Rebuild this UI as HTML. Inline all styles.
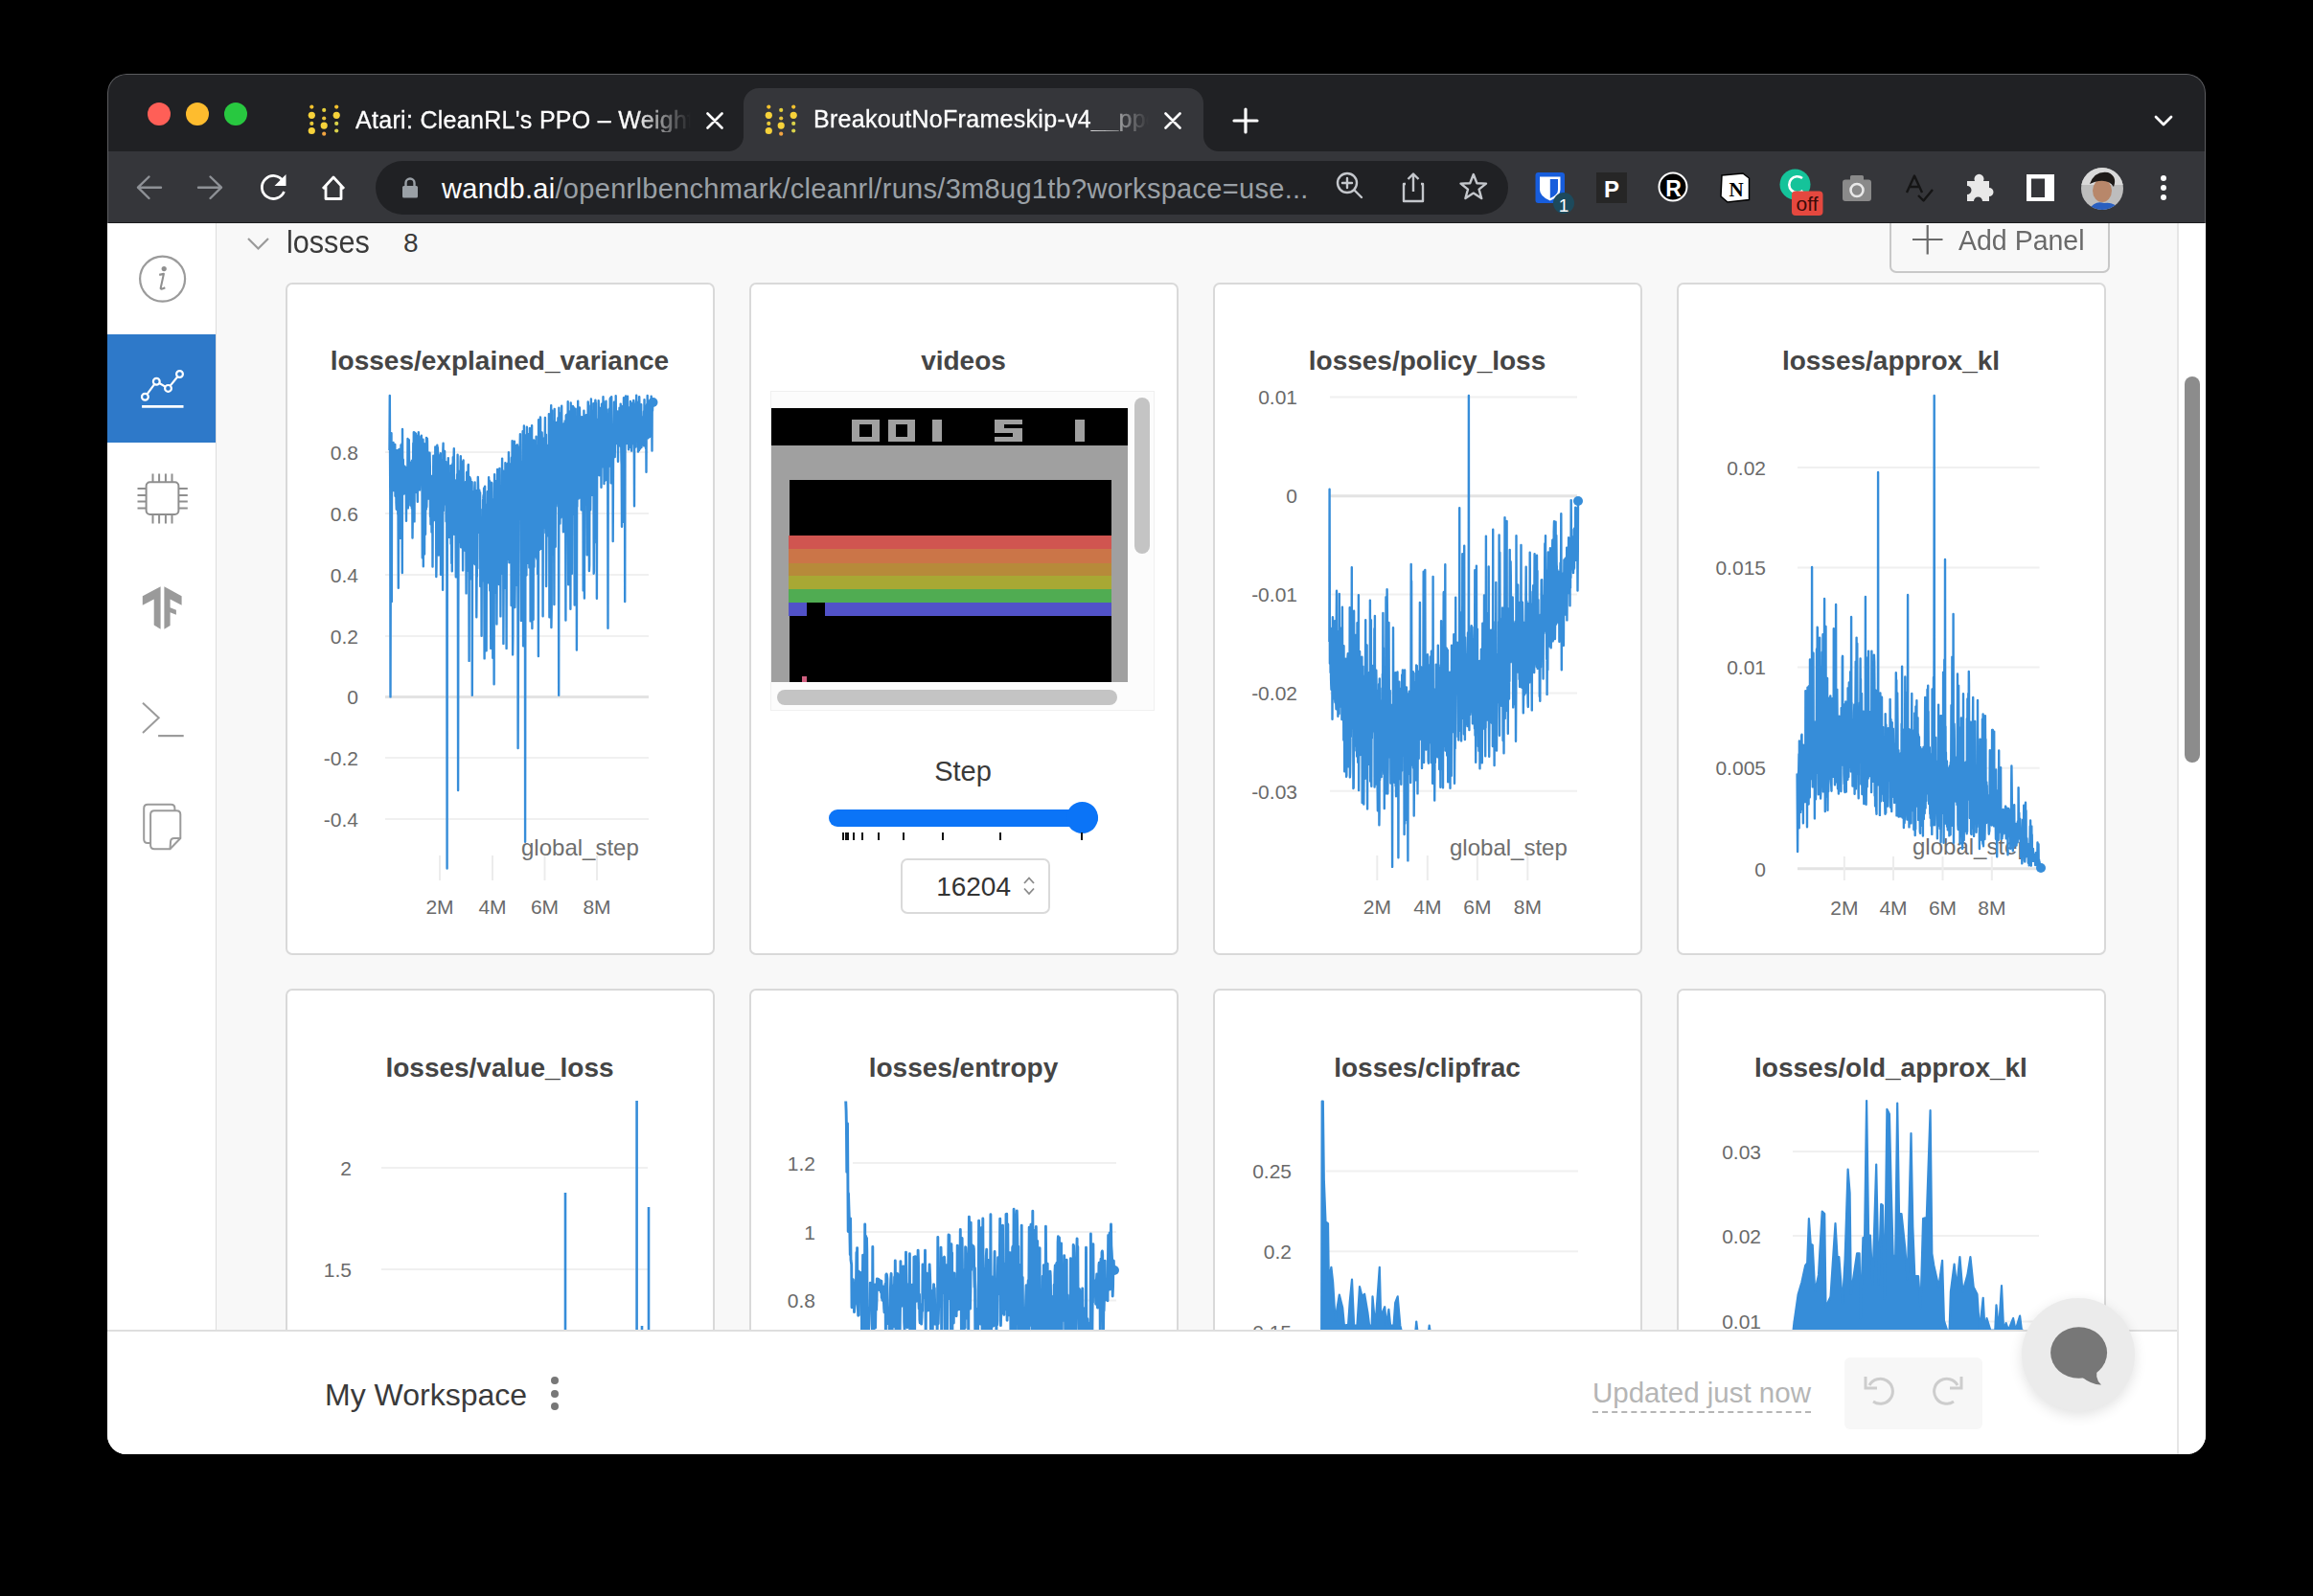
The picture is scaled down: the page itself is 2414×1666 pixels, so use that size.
<!DOCTYPE html><html><head><meta charset="utf-8"><title>wandb</title><style>
*{margin:0;padding:0;box-sizing:border-box}
html,body{width:2414px;height:1666px;overflow:hidden;background:#000}
body{position:relative;font-family:"Liberation Sans",sans-serif}
.a{position:absolute}
.t{position:absolute;white-space:nowrap;line-height:1}
.win{position:absolute;left:0;top:0;width:2414px;height:1666px;clip-path:inset(77px 112px 148px 112px round 20px)}
.main{position:absolute;left:0;top:0;width:2414px;height:1666px;clip-path:inset(233px 142px 278px 226px)}
.panel{position:absolute;background:#fff;border:2px solid #d9d9d9;border-radius:7px}
.ttl{position:absolute;white-space:nowrap;line-height:1;font-weight:bold;font-size:28px;color:#454545;text-align:center}
.yl{position:absolute;white-space:nowrap;line-height:1;font-size:21px;color:#6a6a6a;text-align:right}
.xl{position:absolute;white-space:nowrap;line-height:1;font-size:21px;color:#6a6a6a;text-align:center}
svg{position:absolute;left:0;top:0;overflow:visible}
</style></head><body>
<div class="win">
<div class="a" style="left:112px;top:77px;width:2190px;height:82px;background:#202124"></div>
<div class="a" style="left:112px;top:158px;width:2190px;height:75px;background:#35363a"></div>
<div class="a" style="left:112px;top:232px;width:2190px;height:1px;background:#1b1b1d"></div>
<div class="a" style="left:776px;top:92px;width:480px;height:70px;background:#35363a;border-radius:16px 16px 0 0"></div>
<div class="a" style="left:392px;top:168px;width:1182px;height:56px;background:#202124;border-radius:28px"></div>
<div class="a" style="left:154px;top:107px;width:24px;height:24px;border-radius:50%;background:#ff5f57"></div>
<div class="a" style="left:194px;top:107px;width:24px;height:24px;border-radius:50%;background:#febc2e"></div>
<div class="a" style="left:234px;top:107px;width:24px;height:24px;border-radius:50%;background:#28c840"></div>
<div class="a" style="left:760px;top:142px;width:16px;height:16px;background:radial-gradient(circle at 0 0, #202124 15.5px, #35363a 16.5px)"></div>
<div class="a" style="left:1256px;top:142px;width:16px;height:16px;background:radial-gradient(circle at 100% 0, #202124 15.5px, #35363a 16.5px)"></div>
<svg style="left:321.5px;top:110px" width="33" height="33" viewBox="0 0 33 33"><circle cx="3.3" cy="1.6" r="2.1" fill="#f2c12e"/><circle cx="3.3" cy="10.3" r="3.6" fill="#f7d23a"/><circle cx="3.3" cy="18.9" r="2.1" fill="#e9c93a"/><circle cx="3.3" cy="26.5" r="3.6" fill="#f7d23a"/><circle cx="16.2" cy="4.9" r="2.1" fill="#e4cf3c"/><circle cx="16.2" cy="13.5" r="2.1" fill="#e8c43a"/><circle cx="16.2" cy="21.1" r="3.6" fill="#f7d23a"/><circle cx="16.2" cy="29.7" r="2.1" fill="#f2a541"/><circle cx="29.2" cy="1.6" r="2.1" fill="#f2c12e"/><circle cx="29.2" cy="10.3" r="3.6" fill="#f7d23a"/><circle cx="29.2" cy="18.9" r="2.1" fill="#d9d24a"/><circle cx="29.2" cy="26.5" r="2.1" fill="#d9d24a"/></svg>
<svg style="left:799px;top:110px" width="33" height="33" viewBox="0 0 33 33"><circle cx="3.3" cy="1.6" r="2.1" fill="#f2c12e"/><circle cx="3.3" cy="10.3" r="3.6" fill="#f7d23a"/><circle cx="3.3" cy="18.9" r="2.1" fill="#e9c93a"/><circle cx="3.3" cy="26.5" r="3.6" fill="#f7d23a"/><circle cx="16.2" cy="4.9" r="2.1" fill="#e4cf3c"/><circle cx="16.2" cy="13.5" r="2.1" fill="#e8c43a"/><circle cx="16.2" cy="21.1" r="3.6" fill="#f7d23a"/><circle cx="16.2" cy="29.7" r="2.1" fill="#f2a541"/><circle cx="29.2" cy="1.6" r="2.1" fill="#f2c12e"/><circle cx="29.2" cy="10.3" r="3.6" fill="#f7d23a"/><circle cx="29.2" cy="18.9" r="2.1" fill="#d9d24a"/><circle cx="29.2" cy="26.5" r="2.1" fill="#d9d24a"/></svg>
<div class="t" style="left:371px;top:112.9px;width:352px;overflow:hidden;font-size:25px;letter-spacing:0.3px;color:#fff;-webkit-text-stroke:0.3px #fff;-webkit-mask-image:linear-gradient(90deg,#000 290px,transparent 350px)">Atari: CleanRL&#39;s PPO &#8211; Weights &amp; Biases</div>
<div class="t" style="left:849px;top:112.3px;width:352px;overflow:hidden;font-size:25px;letter-spacing:0.3px;color:#fff;-webkit-text-stroke:0.3px #fff;-webkit-mask-image:linear-gradient(90deg,#000 290px,transparent 350px)">BreakoutNoFrameskip-v4__ppo_atari__1</div>
<svg style="left:0;top:0" width="2414" height="240" viewBox="0 0 2414 240"><path d="M738.5 118.5 L753.5 133.5 M753.5 118.5 L738.5 133.5 M1216.5 118.5 L1231.5 133.5 M1231.5 118.5 L1216.5 133.5" stroke="#fff" stroke-width="2.6" stroke-linecap="round"/><path d="M1288 126 L1312 126 M1300 114 L1300 138" stroke="#fff" stroke-width="3.2" stroke-linecap="round"/><path d="M2250 122 L2258 130 L2266 122" fill="none" stroke="#fff" stroke-width="2.8" stroke-linecap="round" stroke-linejoin="round"/><path d="M144 195.7 L168 195.7 M155.5 184.5 L144 195.7 L155.5 207" fill="none" stroke="#8e9196" stroke-width="2.4" stroke-linecap="round" stroke-linejoin="round"/><path d="M207 195.7 L231 195.7 M219.5 184.5 L231 195.7 L219.5 207" fill="none" stroke="#8e9196" stroke-width="2.4" stroke-linecap="round" stroke-linejoin="round"/><path d="M295.5 189 A12 12 0 1 0 296.5 200" fill="none" stroke="#fff" stroke-width="2.8"/><path d="M298.5 182 L298.5 194 L286.5 194 Z" fill="#fff"/><path d="M337 197 L348 185 L359 197 M340 194.5 L340 207.5 L356 207.5 L356 194.5" fill="none" stroke="#fff" stroke-width="2.8" stroke-linejoin="round"/><rect x="420" y="194" width="16" height="12.5" rx="1.5" fill="#9aa0a6"/><path d="M423.5 194.5 L423.5 191 A4.5 4.5 0 0 1 432.5 191 L432.5 194.5" fill="none" stroke="#9aa0a6" stroke-width="2.4"/><circle cx="1406" cy="191" r="10" fill="none" stroke="#c4c7cc" stroke-width="2.4"/><path d="M1413.5 198.5 L1421 206 M1401 191 L1411 191 M1406 186 L1406 196" stroke="#c4c7cc" stroke-width="2.4" stroke-linecap="round"/><path d="M1467 192 L1465 192 L1465 210 L1485 210 L1485 192 L1483 192 M1475 200 L1475 182 M1469.5 187 L1475 181.5 L1480.5 187" fill="none" stroke="#c4c7cc" stroke-width="2.4" stroke-linejoin="round"/><path d="M1537.8 182 L1541.4 191.2 L1551 191.6 L1543.6 197.6 L1546.2 207 L1537.8 201.6 L1529.4 207 L1532 197.6 L1524.6 191.6 L1534.2 191.2 Z" fill="none" stroke="#c4c7cc" stroke-width="2.4" stroke-linejoin="round"/><rect x="1602.5" y="180" width="30.5" height="32" rx="3" fill="#175ddc"/><path d="M1607 184.5 L1628.5 184.5 L1628.5 198 Q1628.5 205 1617.8 209.5 Q1607 205 1607 198 Z" fill="#fff"/><path d="M1617.8 187 L1626 187 L1626 198 Q1626 203.5 1617.8 207 Z" fill="#175ddc"/><circle cx="1632" cy="212" r="11" fill="#1d4a5c"/><text x="1632" y="221" font-family="Liberation Sans" font-size="19" fill="#fff" text-anchor="middle">1</text><rect x="1666" y="180" width="32" height="32" fill="#262626"/><text x="1682" y="206" font-family="Liberation Sans" font-weight="bold" font-size="24" fill="#fff" text-anchor="middle">P</text><circle cx="1746" cy="195" r="14.5" fill="#000" stroke="#fff" stroke-width="2"/><text x="1746.5" y="204.5" font-family="Liberation Sans" font-weight="bold" font-size="23" fill="#fff" text-anchor="middle">R</text><path d="M1797 183 L1819 181 L1825.5 186 L1825.5 208.5 L1803 211 L1796 205 Z" fill="#fff" stroke="#000" stroke-width="1.5"/><text x="1812" y="205" font-family="Liberation Serif" font-weight="bold" font-size="21" fill="#000" text-anchor="middle">N</text><circle cx="1873.5" cy="192.5" r="16" fill="#15c39a"/><path d="M1881 186 A8.5 8.5 0 1 0 1881.5 199" fill="none" stroke="#fff" stroke-width="2.6"/><rect x="1870" y="199.5" width="32.5" height="25.5" rx="4" fill="#e5483f"/><text x="1886" y="220" font-family="Liberation Sans" font-size="21" fill="#3a0b08" text-anchor="middle">off</text><rect x="1923" y="187.5" width="30" height="22.5" rx="3" fill="#8a8a8a"/><rect x="1931" y="183" width="14" height="6" rx="1.5" fill="#8a8a8a"/><circle cx="1938" cy="198.5" r="6.5" fill="none" stroke="#e8e8e8" stroke-width="2.6"/><path d="M1990 201 L1998 183.5 L2006 201 M1993 195 L2003 195 M2002 204 L2007.5 209.5 L2017 198" fill="none" stroke="#151515" stroke-width="2.4" stroke-linejoin="round"/><path d="M2053 189 L2061 189 A5 5 0 1 1 2070 189 L2076 189 L2076 196 A4.5 4.5 0 1 1 2076 205 L2076 210 L2069 210 A4.5 4.5 0 1 0 2060 210 L2053 210 L2053 203 A4.5 4.5 0 1 0 2053 194 Z" fill="#e8e8e8"/><rect x="2115" y="182" width="29" height="28" fill="#fff"/><rect x="2120" y="186.5" width="14" height="19.5" fill="#35363a"/><defs><clipPath id="av"><circle cx="2194" cy="197" r="22"/></clipPath></defs><g clip-path="url(#av)"><rect x="2172" y="175" width="44" height="44" fill="#bdbdbd"/><rect x="2172" y="175" width="44" height="18" fill="#d9d9d9"/><ellipse cx="2194" cy="199" rx="10" ry="12" fill="#b8876a"/><path d="M2181 192 Q2186 178 2200 180 Q2210 184 2206 195 Q2200 186 2186 190 Z" fill="#1e1a18"/><path d="M2180 219 Q2186 209 2196 212 Q2206 210 2212 219 Z" fill="#2a5fbf"/></g><circle cx="2258" cy="186" r="3" fill="#fff"/><circle cx="2258" cy="196" r="3" fill="#fff"/><circle cx="2258" cy="206" r="3" fill="#fff"/></svg>
<div class="t" style="left:461px;top:182.5px;font-size:29px;letter-spacing:0.3px;color:#fff">wandb.ai<span style="color:#9aa0a6">/openrlbenchmark/cleanrl/runs/3m8ug1tb?workspace=use...</span></div>
<div class="a" style="left:112px;top:233px;width:2190px;height:1285px;background:#f8f8f8"></div>
<div class="a" style="left:112px;top:233px;width:114px;height:1156px;background:#fff;border-right:1px solid #dedede"></div>
<div class="a" style="left:112px;top:349px;width:113px;height:113px;background:#2e79c9"></div>
<svg style="left:0;top:0" width="240" height="1000" viewBox="0 0 240 1000"><circle cx="169.6" cy="291.1" r="23.5" fill="none" stroke="#9b9b9b" stroke-width="2.2"/><path d="M151.4 414.3 L163.3 398.2 L175.5 405.4 L187.5 390.5" fill="none" stroke="#fff" stroke-width="2.2"/><circle cx="151.4" cy="414.3" r="3.4" fill="#2e79c9" stroke="#fff" stroke-width="2.2"/><circle cx="163.3" cy="398.2" r="3.4" fill="#2e79c9" stroke="#fff" stroke-width="2.2"/><circle cx="175.5" cy="405.4" r="3.4" fill="#2e79c9" stroke="#fff" stroke-width="2.2"/><circle cx="187.5" cy="390.5" r="3.4" fill="#2e79c9" stroke="#fff" stroke-width="2.2"/><path d="M148.1 424.4 L191.5 424.4" stroke="#fff" stroke-width="2.6"/><rect x="152.6" y="503.2" width="33.8" height="33.8" rx="4" fill="none" stroke="#8f8f8f" stroke-width="2"/><path d="M159.5 494.4 V503 M166.1 494.4 V503 M172.9 494.4 V503 M179.5 494.4 V503 M159.5 537 V546.5 M166.1 537 V546.5 M172.9 537 V546.5 M179.5 537 V546.5 M143.5 510.1 H152.6 M143.5 517 H152.6 M143.5 523.6 H152.6 M143.5 530.4 H152.6 M186.4 510.1 H195.8 M186.4 517 H195.8 M186.4 523.6 H195.8 M186.4 530.4 H195.8" stroke="#8f8f8f" stroke-width="2"/><path d="M148.8 622.3 L167.6 612.3 L167.6 656.8 L160.7 652.4 L160.7 625.5 L148.8 631.7 Z" fill="#9a9a9a"/><path d="M171.4 612.3 L189.6 622.3 L189.6 631.7 L177.6 625.5 L177.6 634.2 L183.9 636.7 L183.9 641.7 L177.6 639.2 L177.6 653 L171.4 656.8 Z" fill="#9a9a9a"/><path d="M149 733.8 L165.7 749.3 L149 765" fill="none" stroke="#9b9b9b" stroke-width="2"/><path d="M165.1 768.1 L191.7 768.1" stroke="#9b9b9b" stroke-width="2.2"/><path d="M157 880 L154 880 Q150.2 880 150.2 876 L150.2 843.8 Q150.2 839.8 154.2 839.8 L178.4 839.8 Q182.4 839.8 182.4 843.8 L182.4 846.3" fill="none" stroke="#9b9b9b" stroke-width="2"/><path d="M161.1 846.3 L184.3 846.3 Q188.3 846.3 188.3 850.3 L188.3 875 L177.5 886.2 L161.1 886.2 Q157.1 886.2 157.1 882.2 L157.1 850.3 Q157.1 846.3 161.1 846.3 Z" fill="#fff" stroke="#9b9b9b" stroke-width="2"/><path d="M188.3 875 L182 875 Q178 875 178 879 L177.5 886.2" fill="none" stroke="#9b9b9b" stroke-width="2"/></svg>
<svg style="left:0;top:0" width="240" height="400" viewBox="0 0 240 400"><circle cx="171.2" cy="280.6" r="2.6" fill="#8f8f8f"/><path d="M166.2 286.9 L170.9 285.9 L167.7 300.6 Q167.3 302.8 172.3 300.2" fill="none" stroke="#8f8f8f" stroke-width="2.1" stroke-linejoin="round"/></svg>
<div class="a" style="left:2272px;top:233px;width:30px;height:1285px;background:#fff;border-left:2px solid #e6e6e6"></div>
<div class="a" style="left:2280px;top:393px;width:16px;height:403px;background:#8c8c8c;border-radius:8px"></div>
<div class="main">
<div class="panel" style="left:298px;top:295px;width:448px;height:702px"></div>
<div class="panel" style="left:781.5px;top:295px;width:448px;height:702px"></div>
<div class="panel" style="left:1265.5px;top:295px;width:448px;height:702px"></div>
<div class="panel" style="left:1749.5px;top:295px;width:448px;height:702px"></div>
<div class="panel" style="left:298px;top:1032px;width:448px;height:702px"></div>
<div class="panel" style="left:781.5px;top:1032px;width:448px;height:702px"></div>
<div class="panel" style="left:1265.5px;top:1032px;width:448px;height:702px"></div>
<div class="panel" style="left:1749.5px;top:1032px;width:448px;height:702px"></div>
<div class="ttl" style="left:221.5px;top:363.3px;width:600px">losses/explained_variance</div>
<div class="yl" style="left:224px;top:461.7px;width:150px">0.8</div>
<div class="yl" style="left:224px;top:525.7px;width:150px">0.6</div>
<div class="yl" style="left:224px;top:589.7px;width:150px">0.4</div>
<div class="yl" style="left:224px;top:653.7px;width:150px">0.2</div>
<div class="yl" style="left:224px;top:717.2px;width:150px">0</div>
<div class="yl" style="left:224px;top:780.7px;width:150px">-0.2</div>
<div class="yl" style="left:224px;top:844.7px;width:150px">-0.4</div>
<div class="xl" style="left:399px;top:935.7px;width:120px">2M</div>
<div class="xl" style="left:454px;top:935.7px;width:120px">4M</div>
<div class="xl" style="left:508.5px;top:935.7px;width:120px">6M</div>
<div class="xl" style="left:563px;top:935.7px;width:120px">8M</div>
<div class="t" style="left:544px;top:872.8px;font-size:24px;color:#6e6e6e">global_step</div>
<div class="ttl" style="left:705.5px;top:363.3px;width:600px">videos</div>
<div class="a" style="left:804px;top:408px;width:401px;height:334px;background:#fcfcfc;border:1px solid #f0f0f0"></div>
<div class="a" style="left:805px;top:426px;width:372px;height:286px;background:#000;overflow:hidden"><div class="a" style="left:0;top:39px;width:372px;height:247px;background:#a0a0a0"></div><div class="a" style="left:19px;top:75px;width:336px;height:211px;background:#000"></div><div class="a" style="left:18px;top:133px;width:337px;height:14px;background:#d05550"></div><div class="a" style="left:18px;top:147px;width:337px;height:15px;background:#cb7548"></div><div class="a" style="left:18px;top:162px;width:337px;height:13px;background:#b78a3a"></div><div class="a" style="left:18px;top:175px;width:337px;height:14px;background:#a8a834"></div><div class="a" style="left:18px;top:189px;width:337px;height:14px;background:#50ac52"></div><div class="a" style="left:18px;top:203px;width:337px;height:14px;background:#5152c8"></div><div class="a" style="left:37px;top:203px;width:19px;height:14px;background:#000"></div><div class="a" style="left:32px;top:280px;width:5px;height:6px;background:#d06080"></div></div>
<div class="a" style="left:889px;top:438px;width:28.5px;height:23px;background:#a0a0a0"></div>
<div class="a" style="left:897px;top:443px;width:12.5px;height:12.5px;background:#000"></div>
<div class="a" style="left:926.5px;top:438px;width:28.5px;height:23px;background:#a0a0a0"></div>
<div class="a" style="left:934.5px;top:443px;width:12.5px;height:12.5px;background:#000"></div>
<div class="a" style="left:973px;top:438px;width:10px;height:23px;background:#a0a0a0"></div>
<div class="a" style="left:1038px;top:438px;width:29px;height:5px;background:#a0a0a0"></div>
<div class="a" style="left:1038px;top:438px;width:10px;height:12px;background:#a0a0a0"></div>
<div class="a" style="left:1038px;top:447px;width:29px;height:5px;background:#a0a0a0"></div>
<div class="a" style="left:1057px;top:447px;width:10px;height:14px;background:#a0a0a0"></div>
<div class="a" style="left:1038px;top:456px;width:29px;height:5px;background:#a0a0a0"></div>
<div class="a" style="left:1122px;top:438px;width:10px;height:23px;background:#a0a0a0"></div>
<div class="a" style="left:1184px;top:415px;width:16px;height:163px;background:#c4c4c4;border-radius:8px"></div>
<div class="a" style="left:811px;top:720px;width:355px;height:16px;background:#c4c4c4;border-radius:8px"></div>
<div class="t" style="left:905px;top:791px;width:200px;text-align:center;font-size:29px;color:#3a3a3a">Step</div>
<div class="a" style="left:865px;top:845px;width:281px;height:18px;background:#0b74f7;border-radius:9px"></div>
<div class="a" style="left:1113px;top:837px;width:33px;height:33px;background:#0b74f7;border-radius:50%"></div>
<div class="a" style="left:879.2px;top:869px;width:2px;height:8px;background:#111"></div>
<div class="a" style="left:881.6px;top:869px;width:2px;height:8px;background:#111"></div>
<div class="a" style="left:884.3px;top:869px;width:2px;height:8px;background:#111"></div>
<div class="a" style="left:890.2px;top:869px;width:2px;height:8px;background:#111"></div>
<div class="a" style="left:899.2px;top:869px;width:2px;height:8px;background:#111"></div>
<div class="a" style="left:916.1px;top:869px;width:2px;height:8px;background:#111"></div>
<div class="a" style="left:942.1px;top:869px;width:2px;height:8px;background:#111"></div>
<div class="a" style="left:982.9px;top:869px;width:2px;height:8px;background:#111"></div>
<div class="a" style="left:1043.1px;top:869px;width:2px;height:8px;background:#111"></div>
<div class="a" style="left:1128.2px;top:869px;width:2px;height:8px;background:#111"></div>
<div class="a" style="left:940px;top:896px;width:156px;height:58px;border:2px solid #dadada;border-radius:7px;background:#fff"></div>
<div class="t" style="left:955px;top:912px;width:100px;text-align:right;font-size:28px;color:#333">16204</div>
<div class="ttl" style="left:1189.5px;top:363.3px;width:600px">losses/policy_loss</div>
<div class="yl" style="left:1204px;top:404.2px;width:150px">0.01</div>
<div class="yl" style="left:1204px;top:507.4px;width:150px">0</div>
<div class="yl" style="left:1204px;top:610.1px;width:150px">-0.01</div>
<div class="yl" style="left:1204px;top:713.2px;width:150px">-0.02</div>
<div class="yl" style="left:1204px;top:815.5px;width:150px">-0.03</div>
<div class="xl" style="left:1377.3px;top:935.7px;width:120px">2M</div>
<div class="xl" style="left:1429.8px;top:935.7px;width:120px">4M</div>
<div class="xl" style="left:1481.8px;top:935.7px;width:120px">6M</div>
<div class="xl" style="left:1534.3px;top:935.7px;width:120px">8M</div>
<div class="t" style="left:1513px;top:872.8px;font-size:24px;color:#6e6e6e">global_step</div>
<div class="ttl" style="left:1673.5px;top:363.3px;width:600px">losses/approx_kl</div>
<div class="yl" style="left:1693px;top:477.7px;width:150px">0.02</div>
<div class="yl" style="left:1693px;top:582.2px;width:150px">0.015</div>
<div class="yl" style="left:1693px;top:686.3px;width:150px">0.01</div>
<div class="yl" style="left:1693px;top:791.4px;width:150px">0.005</div>
<div class="yl" style="left:1693px;top:896.5px;width:150px">0</div>
<div class="xl" style="left:1864.8px;top:936.7px;width:120px">2M</div>
<div class="xl" style="left:1916px;top:936.7px;width:120px">4M</div>
<div class="xl" style="left:1967.5px;top:936.7px;width:120px">6M</div>
<div class="xl" style="left:2018.8000000000002px;top:936.7px;width:120px">8M</div>
<div class="t" style="left:1996px;top:871.8px;font-size:24px;color:#6e6e6e">global_step</div>
<div class="ttl" style="left:221.5px;top:1101.0px;width:600px">losses/value_loss</div>
<div class="yl" style="left:217px;top:1208.7px;width:150px">2</div>
<div class="yl" style="left:217px;top:1314.7px;width:150px">1.5</div>
<div class="ttl" style="left:705.5px;top:1101.0px;width:600px">losses/entropy</div>
<div class="yl" style="left:701px;top:1203.7px;width:150px">1.2</div>
<div class="yl" style="left:701px;top:1275.7px;width:150px">1</div>
<div class="yl" style="left:701px;top:1347.3px;width:150px">0.8</div>
<div class="ttl" style="left:1189.5px;top:1101.0px;width:600px">losses/clipfrac</div>
<div class="yl" style="left:1198px;top:1212.2px;width:150px">0.25</div>
<div class="yl" style="left:1198px;top:1296.0px;width:150px">0.2</div>
<div class="yl" style="left:1198px;top:1379.7px;width:150px">0.15</div>
<div class="ttl" style="left:1673.5px;top:1101.0px;width:600px">losses/old_approx_kl</div>
<div class="yl" style="left:1688px;top:1191.7px;width:150px">0.03</div>
<div class="yl" style="left:1688px;top:1279.7px;width:150px">0.02</div>
<div class="yl" style="left:1688px;top:1369.1px;width:150px">0.01</div>
<div class="t" style="left:299px;top:234.5px;font-size:34px;color:#3a3a3a;transform-origin:0 0;transform:scaleX(0.9)">losses</div>
<div class="t" style="left:421px;top:240px;font-size:28px;color:#3a3a3a">8</div>
<div class="a" style="left:1972px;top:222px;width:230px;height:63px;border:2px solid #c8c8c8;border-radius:7px;background:#f8f8f8"></div>
<div class="t" style="left:2044px;top:236px;font-size:30px;color:#6a6a6a;transform-origin:0 0;transform:scaleX(0.95)">Add Panel</div>
<svg width="2414" height="1666" viewBox="0 0 2414 1666"><line x1="402" y1="472" x2="677" y2="472" stroke="#f0f0f0" stroke-width="2"/><line x1="402" y1="536" x2="677" y2="536" stroke="#f0f0f0" stroke-width="2"/><line x1="402" y1="600" x2="677" y2="600" stroke="#f0f0f0" stroke-width="2"/><line x1="402" y1="664" x2="677" y2="664" stroke="#f0f0f0" stroke-width="2"/><line x1="402" y1="727.5" x2="677" y2="727.5" stroke="#e3e3e3" stroke-width="3"/><line x1="402" y1="791" x2="677" y2="791" stroke="#f0f0f0" stroke-width="2"/><line x1="402" y1="855" x2="677" y2="855" stroke="#f0f0f0" stroke-width="2"/><line x1="459" y1="893" x2="459" y2="919" stroke="#ececec" stroke-width="2"/><line x1="514" y1="893" x2="514" y2="919" stroke="#ececec" stroke-width="2"/><line x1="568.5" y1="893" x2="568.5" y2="919" stroke="#ececec" stroke-width="2"/><line x1="623" y1="893" x2="623" y2="919" stroke="#ececec" stroke-width="2"/><path d="M406.5 469.9 L406.8 413.0 L407.0 463.4 L407.3 522.8 L407.5 727.4 L407.8 570.9 L408.0 455.7 L408.3 505.2 L408.5 452.2 L408.8 628.0 L409.0 509.1 L409.3 480.7 L409.5 487.8 L409.8 479.1 L410.0 463.7 L410.3 489.0 L410.5 461.9 L410.8 512.0 L411.0 466.0 L411.3 505.8 L411.5 508.8 L411.8 493.8 L412.0 491.9 L412.3 463.9 L412.5 517.8 L412.8 495.6 L413.0 512.5 L413.3 500.4 L413.5 525.0 L413.8 531.7 L414.0 470.3 L414.3 501.8 L414.5 499.5 L414.8 504.5 L415.0 470.4 L415.3 536.8 L415.5 517.9 L415.8 613.8 L416.0 534.2 L416.3 469.6 L416.5 469.0 L416.8 471.2 L417.0 517.9 L417.3 476.0 L417.5 544.9 L417.8 561.8 L418.0 515.0 L418.3 495.9 L418.5 464.5 L418.8 503.6 L419.0 523.6 L419.3 528.0 L419.5 463.2 L419.8 598.0 L420.0 448.0 L420.3 499.2 L420.5 491.1 L420.8 479.7 L421.0 506.6 L421.3 504.2 L421.5 515.6 L421.8 488.6 L422.0 503.9 L422.3 498.8 L422.5 486.7 L422.8 511.6 L423.0 495.6 L423.3 496.9 L423.5 507.4 L423.8 503.4 L424.0 543.7 L424.3 488.0 L424.5 492.7 L424.8 490.7 L425.0 507.8 L425.3 507.7 L425.5 458.0 L425.8 530.4 L426.0 485.9 L426.3 481.1 L426.5 512.3 L426.8 459.2 L427.0 474.8 L427.3 510.0 L427.5 512.9 L427.8 514.2 L428.0 490.9 L428.3 527.6 L428.5 489.9 L428.8 482.8 L429.0 504.6 L429.3 524.1 L429.5 482.4 L429.8 530.4 L430.0 480.7 L430.3 511.2 L430.5 561.6 L430.8 534.2 L431.0 494.3 L431.3 462.6 L431.5 521.6 L431.8 451.2 L432.0 504.8 L432.3 454.2 L432.5 544.4 L432.8 451.7 L433.0 511.4 L433.3 508.7 L433.5 479.1 L433.8 484.2 L434.0 452.8 L434.3 501.8 L434.5 496.5 L434.8 514.1 L435.0 504.3 L435.3 478.1 L435.5 507.9 L435.8 523.7 L436.0 454.8 L436.3 509.4 L436.5 498.6 L436.8 451.3 L437.0 473.5 L437.3 471.4 L437.5 491.3 L437.8 474.6 L438.0 511.5 L438.3 499.1 L438.5 486.4 L438.8 476.8 L439.0 504.6 L439.3 455.6 L439.5 483.3 L439.8 454.6 L440.0 485.4 L440.3 481.0 L440.5 500.9 L440.8 582.3 L441.0 482.7 L441.3 515.0 L441.5 458.7 L441.8 591.3 L442.0 534.2 L442.3 540.4 L442.5 489.9 L442.8 463.1 L443.0 578.4 L443.3 475.5 L443.5 489.9 L443.8 522.0 L444.0 557.7 L444.3 498.3 L444.5 487.4 L444.8 531.4 L445.0 456.9 L445.3 529.2 L445.5 518.4 L445.8 457.6 L446.0 460.7 L446.3 496.5 L446.5 471.6 L446.8 504.0 L447.0 479.5 L447.3 501.4 L447.5 520.5 L447.8 505.8 L448.0 492.5 L448.3 491.3 L448.5 472.8 L448.8 486.8 L449.0 538.9 L449.3 521.4 L449.5 547.2 L449.8 532.9 L450.0 496.8 L450.3 498.0 L450.5 555.4 L450.8 502.6 L451.0 504.9 L451.3 514.6 L451.5 591.5 L451.8 500.4 L452.0 525.6 L452.3 475.6 L452.5 542.0 L452.8 543.3 L453.0 505.6 L453.3 476.1 L453.5 480.4 L453.8 488.6 L454.0 536.9 L454.3 466.4 L454.5 496.5 L454.8 507.0 L455.0 474.1 L455.3 602.0 L455.5 592.9 L455.8 555.1 L456.0 475.3 L456.3 464.7 L456.5 475.1 L456.8 467.0 L457.0 471.5 L457.3 493.5 L457.5 529.8 L457.8 579.6 L458.0 535.6 L458.3 475.7 L458.5 500.9 L458.8 532.3 L459.0 502.3 L459.3 530.5 L459.5 493.7 L459.8 473.3 L460.0 599.8 L460.3 502.3 L460.5 481.6 L460.8 480.2 L461.0 555.7 L461.3 510.6 L461.6 516.1 L461.8 495.6 L462.1 615.7 L462.3 471.9 L462.6 462.7 L462.8 533.2 L463.1 514.0 L463.3 474.7 L463.6 482.6 L463.8 481.4 L464.1 470.9 L464.3 485.4 L464.6 499.5 L464.8 526.4 L465.1 509.5 L465.3 482.0 L465.6 544.3 L465.8 503.2 L466.1 497.7 L466.3 532.7 L466.6 906.5 L466.8 543.3 L467.1 490.3 L467.3 495.4 L467.6 495.1 L467.8 478.1 L468.1 560.6 L468.3 498.7 L468.6 534.7 L468.8 560.7 L469.1 520.3 L469.3 531.6 L469.6 552.9 L469.8 510.0 L470.1 541.4 L470.3 486.0 L470.6 567.8 L470.8 487.0 L471.1 562.6 L471.3 588.1 L471.6 515.5 L471.8 596.2 L472.1 532.4 L472.3 484.2 L472.6 531.6 L472.8 477.2 L473.1 543.2 L473.3 502.6 L473.6 478.8 L473.8 468.2 L474.1 557.8 L474.3 551.6 L474.6 528.3 L474.8 528.4 L475.1 501.4 L475.3 551.1 L475.6 545.7 L475.8 602.2 L476.1 512.4 L476.3 528.7 L476.6 503.3 L476.8 556.6 L477.1 495.2 L477.3 576.9 L477.6 474.8 L477.8 520.4 L478.1 825.1 L478.3 641.7 L478.6 537.1 L478.8 566.4 L479.1 533.2 L479.3 511.1 L479.6 491.8 L479.8 513.5 L480.1 500.2 L480.3 542.7 L480.6 482.0 L480.8 476.3 L481.1 571.2 L481.3 511.9 L481.6 486.0 L481.8 539.3 L482.1 485.7 L482.3 482.5 L482.6 537.4 L482.8 539.5 L483.1 595.4 L483.3 545.7 L483.6 480.5 L483.8 521.5 L484.1 556.8 L484.3 558.3 L484.6 535.7 L484.8 568.8 L485.1 521.2 L485.3 512.3 L485.6 574.9 L485.8 573.3 L486.1 502.9 L486.3 543.0 L486.6 619.4 L486.8 556.6 L487.1 493.0 L487.3 596.1 L487.6 494.8 L487.8 526.1 L488.1 497.8 L488.3 536.6 L488.6 485.9 L488.8 485.0 L489.1 587.0 L489.3 529.9 L489.6 689.9 L489.8 529.9 L490.1 497.9 L490.3 523.0 L490.6 498.7 L490.8 604.2 L491.1 500.1 L491.3 557.7 L491.6 519.4 L491.8 572.3 L492.1 549.6 L492.3 593.6 L492.6 503.2 L492.8 725.7 L493.1 518.8 L493.3 576.0 L493.6 583.6 L493.8 530.1 L494.1 513.4 L494.3 523.0 L494.6 588.4 L494.8 574.7 L495.1 574.7 L495.3 510.2 L495.6 503.4 L495.8 539.1 L496.1 589.3 L496.3 557.3 L496.6 512.0 L496.8 554.9 L497.1 590.2 L497.3 644.2 L497.6 599.6 L497.8 602.1 L498.1 544.0 L498.3 593.3 L498.6 534.8 L498.8 497.9 L499.1 507.1 L499.3 555.7 L499.6 544.1 L499.8 555.8 L500.1 530.4 L500.3 511.6 L500.6 546.7 L500.8 532.2 L501.1 514.3 L501.3 612.1 L501.6 552.2 L501.8 556.1 L502.1 563.6 L502.3 545.6 L502.6 663.8 L502.8 580.1 L503.1 588.7 L503.3 606.3 L503.6 531.8 L503.8 595.6 L504.1 522.1 L504.3 520.9 L504.6 517.0 L504.8 553.1 L505.1 509.5 L505.3 592.3 L505.6 687.4 L505.8 559.1 L506.1 507.8 L506.3 555.1 L506.6 603.8 L506.8 598.3 L507.1 548.3 L507.3 566.2 L507.6 679.3 L507.8 604.0 L508.1 526.8 L508.3 532.5 L508.6 547.8 L508.8 513.3 L509.1 525.4 L509.3 608.4 L509.6 549.9 L509.8 552.8 L510.1 498.2 L510.3 533.8 L510.6 531.9 L510.8 501.8 L511.1 573.0 L511.3 616.5 L511.6 510.5 L511.8 593.9 L512.1 636.7 L512.3 676.9 L512.6 585.0 L512.8 503.8 L513.1 508.8 L513.3 504.2 L513.6 535.4 L513.8 572.4 L514.1 534.3 L514.3 686.7 L514.6 539.7 L514.8 589.0 L515.1 563.7 L515.3 521.2 L515.6 714.3 L515.8 569.3 L516.1 495.2 L516.3 536.4 L516.6 550.5 L516.9 501.9 L517.1 570.7 L517.4 618.9 L517.6 544.9 L517.9 570.7 L518.1 531.8 L518.4 651.6 L518.6 605.4 L518.9 529.5 L519.1 490.0 L519.4 503.7 L519.6 504.6 L519.9 518.7 L520.1 522.2 L520.4 556.4 L520.6 589.7 L520.9 610.0 L521.1 567.8 L521.4 488.9 L521.6 560.0 L521.9 511.8 L522.1 546.4 L522.4 643.4 L522.6 574.3 L522.9 595.8 L523.1 509.5 L523.4 512.2 L523.6 568.9 L523.9 497.3 L524.1 478.6 L524.4 598.8 L524.6 556.5 L524.9 597.8 L525.1 491.5 L525.4 671.9 L525.6 622.7 L525.9 561.1 L526.1 544.7 L526.4 528.6 L526.6 568.7 L526.9 613.9 L527.1 561.5 L527.4 483.1 L527.6 596.4 L527.9 492.0 L528.1 519.5 L528.4 582.6 L528.6 676.9 L528.9 498.4 L529.1 516.0 L529.4 583.9 L529.6 485.3 L529.9 483.8 L530.1 496.3 L530.4 571.9 L530.6 533.7 L530.9 472.1 L531.1 480.1 L531.4 587.3 L531.6 560.8 L531.9 515.4 L532.1 484.2 L532.4 537.0 L532.6 524.8 L532.9 506.2 L533.1 577.2 L533.4 513.0 L533.6 632.0 L533.9 477.7 L534.1 505.0 L534.4 549.0 L534.6 460.3 L534.9 495.4 L535.1 683.4 L535.4 661.2 L535.6 472.2 L535.9 589.2 L536.1 601.3 L536.4 568.5 L536.6 521.6 L536.9 460.7 L537.1 490.1 L537.4 634.1 L537.6 613.5 L537.9 513.6 L538.1 535.8 L538.4 499.5 L538.6 610.8 L538.9 539.6 L539.1 464.9 L539.4 533.1 L539.6 465.7 L539.9 464.3 L540.1 465.7 L540.4 540.6 L540.6 781.1 L540.9 678.9 L541.1 543.9 L541.4 527.4 L541.6 516.7 L541.9 494.2 L542.1 467.0 L542.4 474.0 L542.6 467.2 L542.9 453.1 L543.1 526.8 L543.4 481.9 L543.6 574.9 L543.9 647.9 L544.1 556.9 L544.4 563.7 L544.6 500.6 L544.9 622.2 L545.1 522.3 L545.4 488.3 L545.6 450.2 L545.9 538.5 L546.1 674.2 L546.4 615.4 L546.6 537.5 L546.9 444.4 L547.1 578.1 L547.4 520.6 L547.6 540.6 L547.9 454.2 L548.1 878.8 L548.4 561.4 L548.6 479.7 L548.9 480.9 L549.1 593.8 L549.4 600.5 L549.6 472.6 L549.9 445.7 L550.1 566.7 L550.4 474.5 L550.6 461.6 L550.9 587.7 L551.1 564.6 L551.4 580.4 L551.6 453.1 L551.9 480.2 L552.1 491.0 L552.4 592.4 L552.6 495.3 L552.9 446.9 L553.1 577.9 L553.4 489.7 L553.6 648.4 L553.9 540.7 L554.1 507.5 L554.4 596.0 L554.6 515.1 L554.9 585.5 L555.1 444.1 L555.4 656.1 L555.6 578.1 L555.9 507.2 L556.1 634.5 L556.4 476.7 L556.6 646.8 L556.9 512.2 L557.1 459.5 L557.4 591.7 L557.6 460.3 L557.9 568.4 L558.1 504.1 L558.4 549.8 L558.6 528.8 L558.9 484.5 L559.1 503.8 L559.4 581.3 L559.6 455.8 L559.9 557.2 L560.1 481.6 L560.4 583.5 L560.6 473.0 L560.9 465.6 L561.1 599.1 L561.4 505.4 L561.6 485.8 L561.9 685.0 L562.1 438.2 L562.4 449.8 L562.6 465.6 L562.9 557.4 L563.1 573.8 L563.4 548.9 L563.6 490.0 L563.9 435.5 L564.1 437.1 L564.4 572.7 L564.6 522.1 L564.9 549.4 L565.1 487.5 L565.4 555.3 L565.6 451.4 L565.9 462.7 L566.1 523.6 L566.4 539.9 L566.6 643.2 L566.9 461.9 L567.1 532.8 L567.4 541.2 L567.6 492.9 L567.9 469.9 L568.1 457.3 L568.4 550.7 L568.6 467.8 L568.9 435.9 L569.1 544.1 L569.4 556.2 L569.6 540.0 L569.9 453.7 L570.1 612.0 L570.4 561.7 L570.6 468.8 L570.9 559.4 L571.1 464.8 L571.4 501.3 L571.7 495.2 L571.9 554.1 L572.2 559.4 L572.4 536.6 L572.7 513.5 L572.9 432.1 L573.2 503.8 L573.4 644.3 L573.7 511.9 L573.9 512.8 L574.2 526.6 L574.4 439.5 L574.7 459.3 L574.9 436.5 L575.2 423.1 L575.4 655.1 L575.7 635.4 L575.9 468.1 L576.2 428.5 L576.4 504.2 L576.7 488.5 L576.9 440.2 L577.2 578.8 L577.4 463.7 L577.7 455.3 L577.9 457.5 L578.2 565.2 L578.4 631.0 L578.7 427.0 L578.9 523.5 L579.2 564.1 L579.4 569.1 L579.7 570.7 L579.9 471.6 L580.2 457.1 L580.4 528.6 L580.7 522.2 L580.9 440.9 L581.2 459.2 L581.4 495.2 L581.7 481.1 L581.9 483.4 L582.2 458.3 L582.4 436.2 L582.7 483.0 L582.9 485.2 L583.2 725.7 L583.4 425.8 L583.7 443.3 L583.9 475.1 L584.2 529.7 L584.4 546.5 L584.7 431.7 L584.9 493.6 L585.2 476.1 L585.4 540.3 L585.7 522.6 L585.9 522.1 L586.2 423.7 L586.4 454.9 L586.7 477.2 L586.9 446.8 L587.2 499.7 L587.4 533.9 L587.7 517.8 L587.9 555.2 L588.2 478.9 L588.4 442.4 L588.7 496.7 L588.9 464.6 L589.2 454.4 L589.4 487.1 L589.7 439.5 L589.9 500.8 L590.2 526.3 L590.4 647.6 L590.7 433.8 L590.9 506.5 L591.2 432.9 L591.4 554.0 L591.7 493.8 L591.9 498.6 L592.2 524.1 L592.4 466.2 L592.7 419.3 L592.9 553.6 L593.2 610.3 L593.4 435.5 L593.7 437.3 L593.9 437.9 L594.2 509.7 L594.4 429.6 L594.7 493.7 L594.9 476.7 L595.2 503.7 L595.4 635.8 L595.7 420.5 L595.9 491.4 L596.2 488.0 L596.4 436.6 L596.7 434.1 L596.9 598.7 L597.2 475.3 L597.4 465.9 L597.7 506.1 L597.9 424.0 L598.2 486.7 L598.4 484.2 L598.7 425.1 L598.9 536.6 L599.2 481.0 L599.4 442.2 L599.7 631.5 L599.9 441.7 L600.2 456.7 L600.4 472.1 L600.7 426.8 L600.9 483.3 L601.2 450.0 L601.4 448.3 L601.7 514.6 L601.9 678.5 L602.2 463.0 L602.4 528.8 L602.7 459.5 L602.9 492.7 L603.2 418.7 L603.4 512.3 L603.7 520.6 L603.9 468.1 L604.2 433.9 L604.4 454.5 L604.7 469.4 L604.9 425.4 L605.2 436.6 L605.4 471.6 L605.7 510.7 L605.9 519.6 L606.2 471.6 L606.4 451.9 L606.7 532.2 L606.9 498.1 L607.2 435.2 L607.4 482.7 L607.7 471.3 L607.9 458.3 L608.2 462.0 L608.4 440.6 L608.7 616.4 L608.9 445.5 L609.2 459.4 L609.4 428.8 L609.7 443.2 L609.9 624.6 L610.2 464.1 L610.4 516.0 L610.7 449.3 L610.9 456.2 L611.2 521.3 L611.4 433.8 L611.7 499.5 L611.9 433.1 L612.2 518.9 L612.4 502.2 L612.7 579.2 L612.9 518.3 L613.2 437.4 L613.4 468.6 L613.7 419.4 L613.9 422.3 L614.2 506.9 L614.4 423.5 L614.7 490.0 L614.9 596.1 L615.2 589.6 L615.4 451.9 L615.7 486.0 L615.9 501.2 L616.2 532.3 L616.4 505.7 L616.7 507.1 L616.9 416.4 L617.2 498.9 L617.4 457.2 L617.7 452.8 L617.9 429.3 L618.2 430.5 L618.4 516.8 L618.7 476.1 L618.9 450.6 L619.2 462.6 L619.4 421.3 L619.7 598.7 L619.9 595.9 L620.2 446.3 L620.4 441.5 L620.7 478.3 L620.9 435.6 L621.2 420.6 L621.4 417.6 L621.7 420.8 L621.9 420.7 L622.2 507.6 L622.4 566.7 L622.7 508.6 L622.9 624.8 L623.2 447.6 L623.4 438.0 L623.7 444.1 L623.9 485.8 L624.2 491.6 L624.4 476.8 L624.7 418.3 L624.9 431.4 L625.2 491.0 L625.4 496.3 L625.7 432.1 L625.9 464.5 L626.2 426.0 L626.4 449.2 L626.7 441.9 L627.0 446.4 L627.2 452.2 L627.5 508.7 L627.7 468.6 L628.0 421.6 L628.2 433.9 L628.5 428.4 L628.7 448.8 L629.0 464.2 L629.2 459.1 L629.5 414.2 L629.7 487.2 L630.0 419.1 L630.2 439.4 L630.5 505.1 L630.7 468.6 L631.0 502.0 L631.2 440.8 L631.5 468.4 L631.7 469.9 L632.0 435.1 L632.2 449.2 L632.5 418.7 L632.7 442.7 L633.0 501.0 L633.2 458.4 L633.5 427.5 L633.7 454.2 L634.0 436.1 L634.2 432.2 L634.5 655.7 L634.7 487.4 L635.0 471.8 L635.2 442.2 L635.5 450.8 L635.7 486.6 L636.0 426.8 L636.2 447.3 L636.5 435.9 L636.7 416.2 L637.0 446.3 L637.2 415.1 L637.5 475.5 L637.7 504.2 L638.0 442.2 L638.2 414.1 L638.5 477.0 L638.7 448.3 L639.0 454.4 L639.2 470.6 L639.5 442.9 L639.7 565.1 L640.0 491.4 L640.2 454.2 L640.5 442.9 L640.7 447.3 L641.0 419.7 L641.2 430.8 L641.5 434.0 L641.7 477.0 L642.0 458.6 L642.2 447.7 L642.5 455.0 L642.7 413.3 L643.0 455.6 L643.2 463.1 L643.5 447.7 L643.7 448.1 L644.0 453.2 L644.2 443.4 L644.5 429.5 L644.7 430.4 L645.0 481.8 L645.2 451.8 L645.5 437.5 L645.7 463.7 L646.0 449.7 L646.2 464.0 L646.5 425.7 L646.7 454.6 L647.0 445.1 L647.2 448.9 L647.5 465.7 L647.7 421.6 L648.0 434.3 L648.2 461.0 L648.5 480.7 L648.7 484.6 L649.0 549.8 L649.2 456.0 L649.5 466.8 L649.7 424.1 L650.0 436.9 L650.2 510.0 L650.5 544.9 L650.7 444.6 L651.0 415.1 L651.2 422.6 L651.5 471.9 L651.7 425.7 L652.0 422.9 L652.2 628.0 L652.5 442.9 L652.7 449.0 L653.0 413.4 L653.2 418.0 L653.5 420.6 L653.7 463.1 L654.0 418.1 L654.2 445.4 L654.5 432.2 L654.7 422.2 L655.0 413.7 L655.2 455.5 L655.5 457.3 L655.7 449.5 L656.0 469.2 L656.2 425.2 L656.5 428.8 L656.7 448.9 L657.0 465.3 L657.2 466.9 L657.5 439.1 L657.7 452.8 L658.0 418.9 L658.2 451.5 L658.5 443.5 L658.7 428.3 L659.0 470.6 L659.2 462.2 L659.5 421.0 L659.7 433.4 L660.0 463.1 L660.2 438.9 L660.5 429.4 L660.7 451.5 L661.0 454.1 L661.2 417.9 L661.5 421.4 L661.7 430.5 L662.0 528.3 L662.2 427.8 L662.5 429.1 L662.7 440.0 L663.0 461.1 L663.2 423.6 L663.5 466.6 L663.7 425.7 L664.0 419.7 L664.2 412.8 L664.5 421.7 L664.7 435.1 L665.0 428.5 L665.2 428.8 L665.5 436.3 L665.7 428.1 L666.0 471.6 L666.2 419.6 L666.5 422.1 L666.7 432.7 L667.0 470.0 L667.2 414.1 L667.5 427.1 L667.7 443.6 L668.0 432.6 L668.2 468.2 L668.5 438.2 L668.7 458.4 L669.0 445.8 L669.2 422.2 L669.5 466.9 L669.7 461.9 L670.0 464.0 L670.2 447.3 L670.5 435.7 L670.7 442.0 L671.0 456.9 L671.2 460.2 L671.5 464.3 L671.7 442.7 L672.0 429.5 L672.2 465.4 L672.5 417.3 L672.7 434.9 L673.0 423.5 L673.2 438.2 L673.5 454.5 L673.7 441.2 L674.0 468.0 L674.2 424.8 L674.5 492.8 L674.7 441.2 L675.0 439.2 L675.2 422.0 L675.5 443.6 L675.7 413.0 L676.0 446.6 L676.2 429.9 L676.5 457.3 L676.7 441.8 L677.0 435.7 L677.2 437.9 L677.5 419.5 L677.7 419.3 L678.0 456.1 L678.2 430.2 L678.5 453.3 L678.7 446.0 L679.0 417.2 L679.2 449.6 L679.5 442.0 L679.7 413.6 L680.0 432.1 L680.2 424.9 L680.5 470.6 L680.7 421.1 L681.0 429.0 L681.2 422.9 L681.5 420.0" fill="none" stroke="#368dd9" stroke-width="2.4" stroke-linejoin="round"/><circle cx="681.5" cy="420.0" r="5" fill="#368dd9"/><path d="M1069 922 L1074 916.5 L1079 922 M1069 927.5 L1074 933 L1079 927.5" fill="none" stroke="#8a8a8a" stroke-width="1.8"/><line x1="1388" y1="414.5" x2="1646" y2="414.5" stroke="#f0f0f0" stroke-width="2"/><line x1="1388" y1="517.7" x2="1646" y2="517.7" stroke="#e3e3e3" stroke-width="3"/><line x1="1388" y1="620.4" x2="1646" y2="620.4" stroke="#f0f0f0" stroke-width="2"/><line x1="1388" y1="723.5" x2="1646" y2="723.5" stroke="#f0f0f0" stroke-width="2"/><line x1="1388" y1="825.8" x2="1646" y2="825.8" stroke="#f0f0f0" stroke-width="2"/><line x1="1437.3" y1="893" x2="1437.3" y2="919" stroke="#ececec" stroke-width="2"/><line x1="1489.8" y1="893" x2="1489.8" y2="919" stroke="#ececec" stroke-width="2"/><line x1="1541.8" y1="893" x2="1541.8" y2="919" stroke="#ececec" stroke-width="2"/><line x1="1594.3" y1="893" x2="1594.3" y2="919" stroke="#ececec" stroke-width="2"/><path d="M1387.4 670.1 L1387.6 510.7 L1387.9 692.4 L1388.1 683.5 L1388.3 664.5 L1388.6 702.0 L1388.8 685.8 L1389.1 708.7 L1389.3 715.4 L1389.5 719.9 L1389.8 683.5 L1390.0 672.4 L1390.2 655.6 L1390.5 750.8 L1390.7 705.2 L1390.9 644.3 L1391.2 652.8 L1391.4 712.9 L1391.7 670.3 L1391.9 658.7 L1392.1 725.3 L1392.4 729.5 L1392.6 688.5 L1392.8 691.2 L1393.1 648.1 L1393.3 732.1 L1393.5 733.4 L1393.8 670.3 L1394.0 684.3 L1394.3 734.7 L1394.5 740.2 L1394.7 652.6 L1395.0 616.7 L1395.2 673.2 L1395.4 704.8 L1395.7 671.8 L1395.9 703.5 L1396.1 718.5 L1396.4 747.8 L1396.6 662.7 L1396.8 659.0 L1397.1 729.7 L1397.3 697.7 L1397.6 745.1 L1397.8 619.9 L1398.0 734.5 L1398.3 684.9 L1398.5 696.5 L1398.7 737.5 L1399.0 699.1 L1399.2 731.5 L1399.4 660.6 L1399.7 655.4 L1399.9 672.9 L1400.2 698.3 L1400.4 751.1 L1400.6 722.4 L1400.9 633.8 L1401.1 683.1 L1401.3 749.1 L1401.6 724.3 L1401.8 680.4 L1402.0 689.3 L1402.3 772.5 L1402.5 674.2 L1402.8 746.3 L1403.0 739.8 L1403.2 805.3 L1403.5 703.0 L1403.7 709.2 L1403.9 727.4 L1404.2 717.8 L1404.4 687.7 L1404.6 721.1 L1404.9 694.0 L1405.1 810.7 L1405.4 809.3 L1405.6 759.7 L1405.8 760.4 L1406.1 776.7 L1406.3 709.1 L1406.5 685.7 L1406.8 682.2 L1407.0 787.1 L1407.2 800.3 L1407.5 721.2 L1407.7 753.5 L1408.0 777.4 L1408.2 730.2 L1408.4 778.8 L1408.7 634.3 L1408.9 811.4 L1409.1 806.4 L1409.4 778.5 L1409.6 709.1 L1409.8 769.0 L1410.1 720.1 L1410.3 692.4 L1410.5 751.7 L1410.8 592.2 L1411.0 747.0 L1411.3 707.6 L1411.5 691.1 L1411.7 730.7 L1412.0 760.5 L1412.2 710.6 L1412.4 823.0 L1412.7 822.4 L1412.9 798.5 L1413.1 637.7 L1413.4 759.8 L1413.6 750.1 L1413.9 774.2 L1414.1 778.6 L1414.3 687.3 L1414.6 686.7 L1414.8 772.2 L1415.0 745.1 L1415.3 662.7 L1415.5 783.4 L1415.7 685.5 L1416.0 690.7 L1416.2 789.6 L1416.5 650.3 L1416.7 698.5 L1416.9 706.9 L1417.2 795.8 L1417.4 769.4 L1417.6 744.8 L1417.9 621.1 L1418.1 825.0 L1418.3 774.0 L1418.6 759.3 L1418.8 737.0 L1419.1 679.9 L1419.3 746.9 L1419.5 788.0 L1419.8 737.1 L1420.0 782.7 L1420.2 688.7 L1420.5 750.2 L1420.7 696.8 L1420.9 750.9 L1421.2 779.7 L1421.4 685.8 L1421.7 838.1 L1421.9 775.2 L1422.1 738.6 L1422.4 695.6 L1422.6 825.4 L1422.8 724.5 L1423.1 811.0 L1423.3 839.6 L1423.5 805.9 L1423.8 705.8 L1424.0 786.2 L1424.2 790.9 L1424.5 733.9 L1424.7 812.7 L1425.0 697.4 L1425.2 647.3 L1425.4 757.2 L1425.7 773.6 L1425.9 706.6 L1426.1 705.7 L1426.4 711.5 L1426.6 673.5 L1426.8 735.1 L1427.1 844.4 L1427.3 725.7 L1427.6 741.7 L1427.8 734.9 L1428.0 773.7 L1428.3 747.1 L1428.5 733.9 L1428.7 745.2 L1429.0 701.9 L1429.2 797.7 L1429.4 740.2 L1429.7 787.6 L1429.9 626.6 L1430.2 815.6 L1430.4 756.8 L1430.6 758.1 L1430.9 647.2 L1431.1 770.6 L1431.3 820.7 L1431.6 702.5 L1431.8 770.8 L1432.0 758.6 L1432.3 731.6 L1432.5 694.9 L1432.8 755.5 L1433.0 711.1 L1433.2 701.2 L1433.5 754.7 L1433.7 763.4 L1433.9 702.2 L1434.2 722.1 L1434.4 656.2 L1434.6 821.5 L1434.9 642.9 L1435.1 802.8 L1435.4 809.6 L1435.6 818.6 L1435.8 739.7 L1436.1 741.5 L1436.3 699.7 L1436.5 712.3 L1436.8 756.5 L1437.0 795.0 L1437.2 801.0 L1437.5 811.9 L1437.7 827.7 L1437.9 846.2 L1438.2 735.9 L1438.4 720.8 L1438.7 792.4 L1438.9 827.1 L1439.1 714.3 L1439.4 861.3 L1439.6 847.3 L1439.8 708.5 L1440.1 814.6 L1440.3 780.9 L1440.5 731.4 L1440.8 795.9 L1441.0 797.1 L1441.3 795.9 L1441.5 781.4 L1441.7 811.0 L1442.0 773.9 L1442.2 803.3 L1442.4 718.5 L1442.7 769.1 L1442.9 703.6 L1443.1 763.5 L1443.4 640.0 L1443.6 699.7 L1443.9 676.5 L1444.1 803.9 L1444.3 808.1 L1444.6 696.4 L1444.8 844.0 L1445.0 748.9 L1445.3 748.9 L1445.5 821.6 L1445.7 797.6 L1446.0 733.5 L1446.2 778.1 L1446.5 623.3 L1446.7 828.3 L1446.9 711.7 L1447.2 634.7 L1447.4 715.6 L1447.6 615.3 L1447.9 641.4 L1448.1 823.4 L1448.3 828.5 L1448.6 800.9 L1448.8 754.7 L1449.1 711.3 L1449.3 757.3 L1449.5 649.9 L1449.8 727.4 L1450.0 751.5 L1450.2 742.0 L1450.5 790.3 L1450.7 721.0 L1450.9 789.5 L1451.2 747.0 L1451.4 817.6 L1451.7 735.6 L1451.9 814.1 L1452.1 795.4 L1452.4 776.8 L1452.6 810.8 L1452.8 780.8 L1453.1 904.9 L1453.3 761.0 L1453.5 786.1 L1453.8 759.5 L1454.0 655.1 L1454.2 712.4 L1454.5 748.2 L1454.7 807.7 L1455.0 808.6 L1455.2 720.3 L1455.4 816.7 L1455.7 747.8 L1455.9 767.6 L1456.1 764.1 L1456.4 702.3 L1456.6 820.5 L1456.8 786.2 L1457.1 831.3 L1457.3 825.2 L1457.6 793.1 L1457.8 739.2 L1458.0 790.2 L1458.3 802.5 L1458.5 701.4 L1458.7 749.3 L1459.0 806.2 L1459.2 769.1 L1459.4 895.3 L1459.7 752.3 L1459.9 758.7 L1460.2 769.5 L1460.4 711.7 L1460.6 733.7 L1460.9 813.1 L1461.1 756.6 L1461.3 761.1 L1461.6 718.8 L1461.8 755.1 L1462.0 722.7 L1462.3 818.7 L1462.5 721.9 L1462.8 750.8 L1463.0 804.4 L1463.2 704.4 L1463.5 707.6 L1463.7 772.1 L1463.9 699.4 L1464.2 735.4 L1464.4 788.7 L1464.6 717.0 L1464.9 760.7 L1465.1 743.9 L1465.4 739.3 L1465.6 871.1 L1465.8 769.1 L1466.1 699.4 L1466.3 859.5 L1466.5 749.7 L1466.8 751.0 L1467.0 794.9 L1467.2 755.2 L1467.5 802.6 L1467.7 855.7 L1467.9 717.5 L1468.2 759.6 L1468.4 753.3 L1468.7 801.7 L1468.9 824.7 L1469.1 790.5 L1469.4 898.4 L1469.6 758.9 L1469.8 762.0 L1470.1 724.2 L1470.3 745.0 L1470.5 790.0 L1470.8 721.8 L1471.0 805.5 L1471.3 807.8 L1471.5 774.8 L1471.7 724.9 L1472.0 766.6 L1472.2 817.1 L1472.4 776.3 L1472.7 588.9 L1472.9 755.8 L1473.1 606.5 L1473.4 778.7 L1473.6 798.6 L1473.9 728.3 L1474.1 721.9 L1474.3 730.8 L1474.6 709.8 L1474.8 701.2 L1475.0 801.5 L1475.3 748.1 L1475.5 702.6 L1475.7 851.5 L1476.0 795.5 L1476.2 775.1 L1476.5 729.6 L1476.7 791.6 L1476.9 712.0 L1477.2 741.9 L1477.4 814.2 L1477.6 730.7 L1477.9 772.3 L1478.1 694.4 L1478.3 721.0 L1478.6 807.8 L1478.8 695.0 L1479.1 708.7 L1479.3 706.6 L1479.5 828.4 L1479.8 759.7 L1480.0 700.8 L1480.2 722.3 L1480.5 736.7 L1480.7 791.8 L1480.9 715.9 L1481.2 735.8 L1481.4 715.7 L1481.6 772.1 L1481.9 628.9 L1482.1 724.3 L1482.4 764.5 L1482.6 722.2 L1482.8 745.4 L1483.1 696.1 L1483.3 765.3 L1483.5 750.6 L1483.8 724.1 L1484.0 801.9 L1484.2 779.4 L1484.5 753.4 L1484.7 767.8 L1485.0 764.4 L1485.2 737.6 L1485.4 711.8 L1485.7 596.8 L1485.9 758.1 L1486.1 795.9 L1486.4 690.3 L1486.6 692.4 L1486.8 694.2 L1487.1 756.7 L1487.3 594.9 L1487.6 722.0 L1487.8 690.4 L1488.0 691.4 L1488.3 782.6 L1488.5 736.2 L1488.7 711.1 L1489.0 732.5 L1489.2 744.0 L1489.4 775.9 L1489.7 712.7 L1489.9 683.1 L1490.2 708.7 L1490.4 708.9 L1490.6 794.3 L1490.9 796.7 L1491.1 758.8 L1491.3 739.5 L1491.6 758.9 L1491.8 694.3 L1492.0 729.9 L1492.3 708.4 L1492.5 740.7 L1492.8 685.5 L1493.0 729.3 L1493.2 775.7 L1493.5 735.2 L1493.7 796.0 L1493.9 679.6 L1494.2 729.4 L1494.4 796.0 L1494.6 756.6 L1494.9 693.4 L1495.1 817.8 L1495.4 708.9 L1495.6 602.0 L1495.8 738.5 L1496.1 729.4 L1496.3 784.5 L1496.5 758.8 L1496.8 724.0 L1497.0 719.6 L1497.2 835.5 L1497.5 791.6 L1497.7 786.1 L1497.9 796.1 L1498.2 734.1 L1498.4 782.9 L1498.7 693.7 L1498.9 730.3 L1499.1 771.9 L1499.4 701.4 L1499.6 776.6 L1499.8 735.6 L1500.1 768.3 L1500.3 790.3 L1500.5 751.1 L1500.8 673.6 L1501.0 691.8 L1501.3 725.1 L1501.5 698.4 L1501.7 744.8 L1502.0 738.0 L1502.2 803.1 L1502.4 697.1 L1502.7 701.1 L1502.9 753.6 L1503.1 771.9 L1503.4 821.7 L1503.6 694.2 L1503.9 762.1 L1504.1 648.1 L1504.3 782.3 L1504.6 733.4 L1504.8 796.8 L1505.0 771.4 L1505.3 802.5 L1505.5 784.4 L1505.7 749.7 L1506.0 822.2 L1506.2 708.3 L1506.5 660.3 L1506.7 618.7 L1506.9 617.9 L1507.2 704.5 L1507.4 778.6 L1507.6 735.2 L1507.9 769.5 L1508.1 705.6 L1508.3 589.3 L1508.6 783.6 L1508.8 695.9 L1509.1 745.2 L1509.3 676.2 L1509.5 756.5 L1509.8 721.4 L1510.0 677.1 L1510.2 788.5 L1510.5 708.5 L1510.7 732.0 L1510.9 678.7 L1511.2 816.3 L1511.4 730.3 L1511.6 704.7 L1511.9 780.7 L1512.1 723.3 L1512.4 766.2 L1512.6 749.2 L1512.8 731.3 L1513.1 701.6 L1513.3 771.6 L1513.5 822.8 L1513.8 739.4 L1514.0 740.0 L1514.2 786.4 L1514.5 767.7 L1514.7 809.7 L1515.0 673.8 L1515.2 747.5 L1515.4 732.9 L1515.7 717.3 L1515.9 705.0 L1516.1 756.9 L1516.4 742.8 L1516.6 742.5 L1516.8 764.0 L1517.1 688.3 L1517.3 662.2 L1517.6 715.6 L1517.8 736.9 L1518.0 817.7 L1518.3 769.3 L1518.5 693.1 L1518.7 781.2 L1519.0 717.7 L1519.2 623.6 L1519.4 724.0 L1519.7 702.7 L1519.9 701.0 L1520.2 681.2 L1520.4 673.3 L1520.6 721.6 L1520.9 670.7 L1521.1 707.5 L1521.3 702.7 L1521.6 769.0 L1521.8 691.2 L1522.0 763.2 L1522.3 772.6 L1522.5 677.1 L1522.8 763.3 L1523.0 761.8 L1523.2 530.3 L1523.5 712.4 L1523.7 748.1 L1523.9 752.7 L1524.2 674.5 L1524.4 639.2 L1524.6 704.1 L1524.9 752.2 L1525.1 773.4 L1525.3 661.1 L1525.6 745.6 L1525.8 672.1 L1526.1 749.9 L1526.3 578.2 L1526.5 688.5 L1526.8 718.0 L1527.0 661.9 L1527.2 715.7 L1527.5 657.9 L1527.7 587.9 L1527.9 766.3 L1528.2 569.7 L1528.4 745.3 L1528.7 705.7 L1528.9 772.0 L1529.1 665.4 L1529.4 692.3 L1529.6 715.1 L1529.8 743.3 L1530.1 727.4 L1530.3 755.8 L1530.5 753.9 L1530.8 742.7 L1531.0 732.4 L1531.3 682.9 L1531.5 758.0 L1531.7 685.6 L1532.0 660.4 L1532.2 676.8 L1532.4 729.4 L1532.7 732.2 L1532.9 413.0 L1533.1 721.5 L1533.4 762.0 L1533.6 690.0 L1533.9 717.9 L1534.1 743.0 L1534.3 746.0 L1534.6 667.0 L1534.8 671.4 L1535.0 743.0 L1535.3 683.5 L1535.5 655.5 L1535.7 653.1 L1536.0 666.2 L1536.2 703.8 L1536.5 654.7 L1536.7 663.9 L1536.9 755.2 L1537.2 669.5 L1537.4 666.9 L1537.6 707.8 L1537.9 668.1 L1538.1 717.5 L1538.3 753.5 L1538.6 727.3 L1538.8 747.1 L1539.0 760.5 L1539.3 595.1 L1539.5 767.6 L1539.8 735.6 L1540.0 737.9 L1540.2 795.8 L1540.5 728.1 L1540.7 735.1 L1540.9 590.8 L1541.2 695.2 L1541.4 679.3 L1541.6 697.4 L1541.9 656.6 L1542.1 727.9 L1542.4 718.3 L1542.6 725.7 L1542.8 779.0 L1543.1 705.2 L1543.3 691.3 L1543.5 783.7 L1543.8 705.7 L1544.0 713.0 L1544.2 689.9 L1544.5 802.2 L1544.7 705.3 L1545.0 728.8 L1545.2 755.9 L1545.4 710.0 L1545.7 736.2 L1545.9 677.6 L1546.1 715.4 L1546.4 685.1 L1546.6 699.6 L1546.8 796.2 L1547.1 711.4 L1547.3 650.8 L1547.6 695.7 L1547.8 697.4 L1548.0 677.2 L1548.3 731.1 L1548.5 743.3 L1548.7 760.6 L1549.0 621.4 L1549.2 729.2 L1549.4 657.5 L1549.7 688.3 L1549.9 700.9 L1550.2 789.3 L1550.4 711.1 L1550.6 759.4 L1550.9 559.6 L1551.1 736.2 L1551.3 651.3 L1551.6 653.1 L1551.8 751.5 L1552.0 733.5 L1552.3 640.6 L1552.5 641.5 L1552.8 689.6 L1553.0 699.4 L1553.2 695.1 L1553.5 729.7 L1553.7 591.5 L1553.9 756.1 L1554.2 789.8 L1554.4 755.7 L1554.6 688.4 L1554.9 696.3 L1555.1 686.9 L1555.3 751.2 L1555.6 726.1 L1555.8 712.3 L1556.1 657.7 L1556.3 666.2 L1556.5 746.5 L1556.8 754.8 L1557.0 673.4 L1557.2 710.4 L1557.5 748.4 L1557.7 714.1 L1557.9 779.1 L1558.2 552.7 L1558.4 694.8 L1558.7 648.9 L1558.9 687.0 L1559.1 690.1 L1559.4 702.2 L1559.6 799.0 L1559.8 659.4 L1560.1 720.2 L1560.3 713.9 L1560.5 734.1 L1560.8 733.7 L1561.0 756.9 L1561.3 608.0 L1561.5 683.0 L1561.7 711.9 L1562.0 783.5 L1562.2 752.9 L1562.4 733.6 L1562.7 689.9 L1562.9 683.0 L1563.1 715.4 L1563.4 719.6 L1563.6 711.2 L1563.9 733.0 L1564.1 649.1 L1564.3 706.2 L1564.6 558.5 L1564.8 686.6 L1565.0 767.7 L1565.3 576.7 L1565.5 644.2 L1565.7 648.2 L1566.0 703.2 L1566.2 704.5 L1566.5 646.2 L1566.7 675.3 L1566.9 729.9 L1567.2 721.0 L1567.4 736.9 L1567.6 666.4 L1567.9 695.6 L1568.1 634.4 L1568.3 705.6 L1568.6 773.0 L1568.8 664.7 L1569.0 748.2 L1569.3 693.4 L1569.5 786.2 L1569.8 693.8 L1570.0 711.2 L1570.2 712.6 L1570.5 540.1 L1570.7 749.9 L1570.9 719.4 L1571.2 686.9 L1571.4 642.7 L1571.6 693.2 L1571.9 641.5 L1572.1 632.6 L1572.4 724.1 L1572.6 543.9 L1572.8 711.5 L1573.1 742.2 L1573.3 699.7 L1573.5 646.9 L1573.8 765.7 L1574.0 708.1 L1574.2 640.5 L1574.5 642.7 L1574.7 635.3 L1575.0 729.6 L1575.2 680.6 L1575.4 711.0 L1575.7 573.9 L1575.9 643.0 L1576.1 691.2 L1576.4 640.5 L1576.6 586.3 L1576.8 600.8 L1577.1 662.7 L1577.3 678.8 L1577.6 687.7 L1577.8 638.9 L1578.0 670.5 L1578.3 628.4 L1578.5 691.4 L1578.7 623.4 L1579.0 669.2 L1579.2 738.4 L1579.4 729.6 L1579.7 725.1 L1579.9 735.1 L1580.2 704.9 L1580.4 705.6 L1580.6 650.5 L1580.9 721.3 L1581.1 665.4 L1581.3 691.0 L1581.6 648.6 L1581.8 701.5 L1582.0 773.7 L1582.3 725.4 L1582.5 559.3 L1582.7 648.0 L1583.0 646.1 L1583.2 683.8 L1583.5 679.8 L1583.7 697.2 L1583.9 631.9 L1584.2 610.4 L1584.4 701.5 L1584.6 692.3 L1584.9 669.2 L1585.1 633.8 L1585.3 628.6 L1585.6 708.9 L1585.8 645.4 L1586.1 717.1 L1586.3 670.0 L1586.5 714.9 L1586.8 686.8 L1587.0 702.5 L1587.2 662.8 L1587.5 568.9 L1587.7 675.3 L1587.9 711.3 L1588.2 717.8 L1588.4 671.5 L1588.7 683.8 L1588.9 628.7 L1589.1 637.6 L1589.4 659.5 L1589.6 708.5 L1589.8 744.2 L1590.1 725.8 L1590.3 692.5 L1590.5 650.0 L1590.8 725.5 L1591.0 724.8 L1591.3 676.0 L1591.5 693.0 L1591.7 658.5 L1592.0 723.6 L1592.2 697.2 L1592.4 627.3 L1592.7 591.7 L1592.9 656.6 L1593.1 660.2 L1593.4 627.8 L1593.6 684.7 L1593.9 680.9 L1594.1 656.5 L1594.3 710.9 L1594.6 733.7 L1594.8 738.0 L1595.0 643.0 L1595.3 639.9 L1595.5 630.0 L1595.7 685.7 L1596.0 691.2 L1596.2 712.4 L1596.5 658.8 L1596.7 576.7 L1596.9 619.8 L1597.2 634.4 L1597.4 617.6 L1597.6 678.6 L1597.9 662.8 L1598.1 703.5 L1598.3 664.6 L1598.6 707.0 L1598.8 741.4 L1599.0 647.6 L1599.3 644.6 L1599.5 630.4 L1599.8 691.1 L1600.0 626.2 L1600.2 611.3 L1600.5 640.1 L1600.7 636.8 L1600.9 616.3 L1601.2 702.0 L1601.4 611.9 L1601.6 578.2 L1601.9 629.3 L1602.1 693.0 L1602.4 681.4 L1602.6 636.1 L1602.8 693.3 L1603.1 602.5 L1603.3 614.2 L1603.5 609.6 L1603.8 695.9 L1604.0 579.8 L1604.2 657.3 L1604.5 596.0 L1604.7 697.9 L1605.0 652.6 L1605.2 652.5 L1605.4 626.2 L1605.7 697.3 L1605.9 678.3 L1606.1 674.9 L1606.4 687.1 L1606.6 643.3 L1606.8 726.9 L1607.1 697.2 L1607.3 731.7 L1607.6 658.3 L1607.8 641.7 L1608.0 696.5 L1608.3 644.2 L1608.5 641.4 L1608.7 605.4 L1609.0 663.8 L1609.2 605.3 L1609.4 624.1 L1609.7 624.9 L1609.9 687.3 L1610.2 664.5 L1610.4 681.3 L1610.6 708.6 L1610.9 621.6 L1611.1 641.6 L1611.3 660.9 L1611.6 642.4 L1611.8 655.9 L1612.0 630.6 L1612.3 567.5 L1612.5 628.3 L1612.7 658.6 L1613.0 559.1 L1613.2 611.9 L1613.5 595.4 L1613.7 608.9 L1613.9 646.4 L1614.2 688.0 L1614.4 629.5 L1614.6 724.9 L1614.9 674.2 L1615.1 614.9 L1615.3 699.3 L1615.6 596.9 L1615.8 576.5 L1616.1 668.4 L1616.3 644.3 L1616.5 626.3 L1616.8 655.6 L1617.0 674.1 L1617.2 674.5 L1617.5 638.0 L1617.7 634.6 L1617.9 572.2 L1618.2 643.7 L1618.4 583.6 L1618.7 676.3 L1618.9 666.3 L1619.1 594.6 L1619.4 594.9 L1619.6 616.6 L1619.8 663.1 L1620.1 572.9 L1620.3 563.7 L1620.5 661.9 L1620.8 669.4 L1621.0 629.9 L1621.3 600.6 L1621.5 604.6 L1621.7 554.5 L1622.0 544.3 L1622.2 600.3 L1622.4 648.8 L1622.7 666.5 L1622.9 667.1 L1623.1 650.0 L1623.4 644.0 L1623.6 544.7 L1623.9 626.8 L1624.1 651.5 L1624.3 559.0 L1624.6 589.1 L1624.8 591.3 L1625.0 642.0 L1625.3 595.0 L1625.5 646.1 L1625.7 649.1 L1626.0 624.8 L1626.2 597.5 L1626.4 649.8 L1626.7 614.8 L1626.9 597.0 L1627.2 621.0 L1627.4 669.7 L1627.6 638.4 L1627.9 662.5 L1628.1 627.5 L1628.3 608.4 L1628.6 587.6 L1628.8 587.8 L1629.0 614.0 L1629.3 536.3 L1629.5 594.7 L1629.8 699.2 L1630.0 603.7 L1630.2 635.2 L1630.5 608.0 L1630.7 598.8 L1630.9 629.3 L1631.2 614.1 L1631.4 620.5 L1631.6 611.6 L1631.9 673.7 L1632.1 632.5 L1632.4 584.4 L1632.6 629.5 L1632.8 638.0 L1633.1 619.8 L1633.3 641.5 L1633.5 620.9 L1633.8 582.7 L1634.0 611.1 L1634.2 621.3 L1634.5 613.9 L1634.7 607.5 L1635.0 598.7 L1635.2 571.6 L1635.4 647.4 L1635.7 609.7 L1635.9 580.7 L1636.1 606.2 L1636.4 590.7 L1636.6 588.6 L1636.8 604.2 L1637.1 561.1 L1637.3 567.1 L1637.6 619.0 L1637.8 614.6 L1638.0 571.8 L1638.3 590.0 L1638.5 632.3 L1638.7 573.4 L1639.0 613.7 L1639.2 562.2 L1639.4 603.0 L1639.7 522.1 L1639.9 565.9 L1640.1 593.5 L1640.4 552.6 L1640.6 594.4 L1640.9 583.9 L1641.1 576.1 L1641.3 564.3 L1641.6 590.8 L1641.8 563.8 L1642.0 598.1 L1642.3 588.6 L1642.5 560.3 L1642.7 585.2 L1643.0 593.4 L1643.2 551.4 L1643.5 553.8 L1643.7 563.4 L1643.9 582.8 L1644.2 529.7 L1644.4 565.6 L1644.6 563.9 L1644.9 584.7 L1645.1 530.2 L1645.3 579.2 L1645.6 573.0 L1645.8 549.4 L1646.1 547.1 L1646.3 571.6 L1646.5 616.6 L1646.8 572.3 L1647.0 523.0" fill="none" stroke="#368dd9" stroke-width="2.4" stroke-linejoin="round"/><circle cx="1647.0" cy="523.0" r="5" fill="#368dd9"/><line x1="1876" y1="488" x2="2128.6" y2="488" stroke="#f0f0f0" stroke-width="2"/><line x1="1876" y1="592.5" x2="2128.6" y2="592.5" stroke="#f0f0f0" stroke-width="2"/><line x1="1876" y1="696.6" x2="2128.6" y2="696.6" stroke="#f0f0f0" stroke-width="2"/><line x1="1876" y1="801.7" x2="2128.6" y2="801.7" stroke="#f0f0f0" stroke-width="2"/><line x1="1876" y1="906.8" x2="2128.6" y2="906.8" stroke="#e3e3e3" stroke-width="3"/><line x1="1924.8" y1="894" x2="1924.8" y2="919" stroke="#ececec" stroke-width="2"/><line x1="1976" y1="894" x2="1976" y2="919" stroke="#ececec" stroke-width="2"/><line x1="2027.5" y1="894" x2="2027.5" y2="919" stroke="#ececec" stroke-width="2"/><line x1="2078.8" y1="894" x2="2078.8" y2="919" stroke="#ececec" stroke-width="2"/><path d="M1875.6 807.6 L1875.8 840.4 L1876.1 889.0 L1876.3 842.1 L1876.5 864.7 L1876.8 807.3 L1877.0 807.0 L1877.2 805.2 L1877.5 787.2 L1877.7 864.2 L1877.9 773.4 L1878.1 807.5 L1878.4 821.7 L1878.6 805.0 L1878.8 840.0 L1879.1 847.9 L1879.3 774.1 L1879.5 845.5 L1879.8 837.2 L1880.0 800.1 L1880.2 768.1 L1880.5 766.7 L1880.7 828.0 L1880.9 829.1 L1881.2 789.8 L1881.4 790.4 L1881.6 798.3 L1881.9 859.2 L1882.1 777.8 L1882.3 783.3 L1882.5 837.8 L1882.8 782.6 L1883.0 830.5 L1883.2 803.2 L1883.5 801.9 L1883.7 815.9 L1883.9 787.1 L1884.2 808.2 L1884.4 721.1 L1884.6 837.1 L1884.9 829.4 L1885.1 783.5 L1885.3 770.1 L1885.6 723.6 L1885.8 735.6 L1886.0 863.3 L1886.2 789.1 L1886.5 717.6 L1886.7 784.1 L1886.9 773.5 L1887.2 825.9 L1887.4 839.0 L1887.6 839.5 L1887.9 716.3 L1888.1 777.2 L1888.3 775.9 L1888.6 832.5 L1888.8 831.9 L1889.0 688.4 L1889.3 810.5 L1889.5 778.2 L1889.7 774.2 L1890.0 793.5 L1890.2 797.8 L1890.4 793.5 L1890.6 765.9 L1890.9 813.1 L1891.1 592.0 L1891.3 798.4 L1891.6 808.5 L1891.8 821.4 L1892.0 763.8 L1892.3 762.5 L1892.5 681.7 L1892.7 781.3 L1893.0 787.7 L1893.2 820.9 L1893.4 793.3 L1893.7 753.5 L1893.9 854.4 L1894.1 763.3 L1894.4 785.4 L1894.6 821.8 L1894.8 832.8 L1895.0 834.2 L1895.3 793.9 L1895.5 782.8 L1895.7 806.8 L1896.0 677.5 L1896.2 784.5 L1896.4 765.8 L1896.7 654.7 L1896.9 655.5 L1897.1 796.2 L1897.4 771.7 L1897.6 754.6 L1897.8 829.2 L1898.1 775.3 L1898.3 804.3 L1898.5 821.1 L1898.7 764.2 L1899.0 815.2 L1899.2 665.7 L1899.4 742.3 L1899.7 792.4 L1899.9 696.2 L1900.1 833.6 L1900.4 825.8 L1900.6 810.5 L1900.8 768.5 L1901.1 796.1 L1901.3 797.2 L1901.5 745.5 L1901.8 680.8 L1902.0 721.0 L1902.2 780.5 L1902.5 662.2 L1902.7 794.6 L1902.9 826.4 L1903.1 807.1 L1903.4 775.7 L1903.6 773.7 L1903.8 741.1 L1904.1 625.0 L1904.3 761.4 L1904.5 768.7 L1904.8 847.0 L1905.0 813.6 L1905.2 812.7 L1905.5 654.0 L1905.7 769.3 L1905.9 811.3 L1906.2 781.9 L1906.4 714.2 L1906.6 831.6 L1906.9 784.4 L1907.1 707.9 L1907.3 806.2 L1907.5 845.8 L1907.8 779.9 L1908.0 816.1 L1908.2 826.2 L1908.5 810.2 L1908.7 754.6 L1908.9 729.8 L1909.2 768.3 L1909.4 728.5 L1909.6 813.0 L1909.9 770.6 L1910.1 769.2 L1910.3 726.5 L1910.6 793.6 L1910.8 773.3 L1911.0 816.0 L1911.2 819.1 L1911.5 825.7 L1911.7 751.3 L1911.9 761.5 L1912.2 729.2 L1912.4 808.6 L1912.6 790.8 L1912.9 810.8 L1913.1 773.7 L1913.3 803.8 L1913.6 798.7 L1913.8 656.3 L1914.0 712.6 L1914.3 737.4 L1914.5 728.0 L1914.7 749.5 L1915.0 819.3 L1915.2 802.0 L1915.4 740.2 L1915.6 796.5 L1915.9 803.6 L1916.1 631.0 L1916.3 816.3 L1916.6 789.3 L1916.8 769.5 L1917.0 739.3 L1917.3 719.6 L1917.5 739.6 L1917.7 757.5 L1918.0 823.2 L1918.2 754.4 L1918.4 805.3 L1918.7 816.5 L1918.9 828.6 L1919.1 805.0 L1919.4 761.4 L1919.6 747.8 L1919.8 750.2 L1920.0 766.5 L1920.3 818.8 L1920.5 767.4 L1920.7 793.6 L1921.0 813.7 L1921.2 750.3 L1921.4 826.0 L1921.7 739.0 L1921.9 780.1 L1922.1 775.9 L1922.4 798.6 L1922.6 778.4 L1922.8 686.2 L1923.1 684.8 L1923.3 792.5 L1923.5 760.5 L1923.7 736.5 L1924.0 798.2 L1924.2 765.1 L1924.4 807.9 L1924.7 818.3 L1924.9 784.5 L1925.1 824.1 L1925.4 827.0 L1925.6 735.0 L1925.8 756.1 L1926.1 810.8 L1926.3 732.4 L1926.5 796.3 L1926.8 826.6 L1927.0 751.7 L1927.2 740.5 L1927.5 745.9 L1927.7 814.1 L1927.9 778.7 L1928.1 739.2 L1928.4 813.7 L1928.6 718.2 L1928.8 731.4 L1929.1 763.0 L1929.3 810.9 L1929.5 784.7 L1929.8 712.4 L1930.0 796.8 L1930.2 781.4 L1930.5 795.6 L1930.7 739.4 L1930.9 781.9 L1931.2 701.3 L1931.4 800.8 L1931.6 725.9 L1931.9 805.4 L1932.1 644.0 L1932.3 748.0 L1932.5 733.6 L1932.8 771.7 L1933.0 760.2 L1933.2 764.6 L1933.5 820.6 L1933.7 780.1 L1933.9 750.9 L1934.2 812.8 L1934.4 808.4 L1934.6 757.2 L1934.9 796.9 L1935.1 744.0 L1935.3 735.5 L1935.6 828.8 L1935.8 794.7 L1936.0 796.6 L1936.2 774.6 L1936.5 725.0 L1936.7 690.6 L1936.9 823.4 L1937.2 771.6 L1937.4 745.9 L1937.6 665.6 L1937.9 742.5 L1938.1 750.4 L1938.3 671.8 L1938.6 800.2 L1938.8 778.5 L1939.0 807.2 L1939.3 778.1 L1939.5 821.2 L1939.7 833.2 L1940.0 739.6 L1940.2 762.8 L1940.4 762.9 L1940.6 765.6 L1940.9 733.6 L1941.1 769.7 L1941.3 752.6 L1941.6 687.4 L1941.8 740.7 L1942.0 708.9 L1942.3 818.5 L1942.5 804.5 L1942.7 774.0 L1943.0 723.9 L1943.2 765.0 L1943.4 829.1 L1943.7 747.7 L1943.9 743.2 L1944.1 770.0 L1944.4 775.3 L1944.6 745.8 L1944.8 742.8 L1945.0 807.2 L1945.3 839.1 L1945.5 757.3 L1945.7 747.5 L1946.0 763.8 L1946.2 761.2 L1946.4 744.1 L1946.7 827.4 L1946.9 623.0 L1947.1 807.8 L1947.4 813.4 L1947.6 839.7 L1947.8 824.2 L1948.1 764.7 L1948.3 820.4 L1948.5 687.7 L1948.7 821.2 L1949.0 775.6 L1949.2 744.4 L1949.4 686.2 L1949.7 812.5 L1949.9 779.9 L1950.1 679.8 L1950.4 796.2 L1950.6 794.7 L1950.8 793.0 L1951.1 770.0 L1951.3 789.1 L1951.5 768.8 L1951.8 810.0 L1952.0 743.3 L1952.2 767.9 L1952.5 747.4 L1952.7 800.4 L1952.9 750.2 L1953.1 827.0 L1953.4 679.7 L1953.6 712.9 L1953.8 740.5 L1954.1 772.3 L1954.3 747.1 L1954.5 751.5 L1954.8 762.0 L1955.0 815.7 L1955.2 789.7 L1955.5 756.7 L1955.7 796.1 L1955.9 683.6 L1956.2 691.4 L1956.4 712.5 L1956.6 830.4 L1956.9 807.7 L1957.1 841.4 L1957.3 803.3 L1957.5 814.5 L1957.8 720.8 L1958.0 762.4 L1958.2 845.4 L1958.5 849.8 L1958.7 757.9 L1958.9 793.8 L1959.2 810.3 L1959.4 788.8 L1959.6 806.9 L1959.9 789.5 L1960.1 493.0 L1960.3 760.4 L1960.6 819.2 L1960.8 804.4 L1961.0 741.7 L1961.2 752.3 L1961.5 809.3 L1961.7 784.1 L1961.9 850.9 L1962.2 800.3 L1962.4 723.4 L1962.6 777.4 L1962.9 793.0 L1963.1 836.2 L1963.3 790.5 L1963.6 805.3 L1963.8 743.2 L1964.0 727.7 L1964.3 828.6 L1964.5 820.8 L1964.7 790.6 L1965.0 798.3 L1965.2 759.0 L1965.4 804.5 L1965.6 813.6 L1965.9 835.9 L1966.1 806.4 L1966.3 801.8 L1966.6 789.1 L1966.8 788.3 L1967.0 815.0 L1967.3 843.4 L1967.5 849.7 L1967.7 745.2 L1968.0 786.4 L1968.2 848.5 L1968.4 756.4 L1968.7 805.4 L1968.9 798.0 L1969.1 782.0 L1969.4 816.7 L1969.6 827.6 L1969.8 818.8 L1970.0 813.7 L1970.3 841.6 L1970.5 832.1 L1970.7 760.1 L1971.0 781.9 L1971.2 769.1 L1971.4 779.8 L1971.7 771.0 L1971.9 814.7 L1972.1 791.7 L1972.4 814.7 L1972.6 729.9 L1972.8 753.0 L1973.1 842.7 L1973.3 807.4 L1973.5 750.9 L1973.7 800.2 L1974.0 766.3 L1974.2 847.0 L1974.4 777.7 L1974.7 754.1 L1974.9 832.1 L1975.1 762.0 L1975.4 768.8 L1975.6 768.7 L1975.8 760.6 L1976.1 799.6 L1976.3 799.2 L1976.5 801.7 L1976.8 783.6 L1977.0 800.7 L1977.2 837.9 L1977.5 776.5 L1977.7 806.2 L1977.9 791.9 L1978.1 801.8 L1978.4 773.9 L1978.6 757.7 L1978.8 702.2 L1979.1 722.9 L1979.3 710.1 L1979.5 851.4 L1979.8 812.5 L1980.0 751.6 L1980.2 723.5 L1980.5 758.5 L1980.7 826.1 L1980.9 816.5 L1981.2 834.4 L1981.4 783.1 L1981.6 852.6 L1981.9 838.3 L1982.1 813.7 L1982.3 814.8 L1982.5 816.1 L1982.8 788.9 L1983.0 841.2 L1983.2 786.8 L1983.5 825.3 L1983.7 852.2 L1983.9 794.4 L1984.2 819.4 L1984.4 837.1 L1984.6 755.6 L1984.9 835.2 L1985.1 695.7 L1985.3 799.9 L1985.6 853.5 L1985.8 794.7 L1986.0 765.3 L1986.2 796.8 L1986.5 798.2 L1986.7 787.9 L1986.9 864.1 L1987.2 815.8 L1987.4 761.5 L1987.6 859.3 L1987.9 852.2 L1988.1 792.1 L1988.3 706.4 L1988.6 772.4 L1988.8 789.4 L1989.0 833.7 L1989.3 791.3 L1989.5 730.8 L1989.7 781.6 L1990.0 815.2 L1990.2 842.8 L1990.4 855.5 L1990.6 722.7 L1990.9 763.0 L1991.1 621.0 L1991.3 788.5 L1991.6 836.1 L1991.8 776.9 L1992.0 760.9 L1992.3 839.2 L1992.5 863.4 L1992.7 793.6 L1993.0 822.8 L1993.2 845.0 L1993.4 795.8 L1993.7 808.4 L1993.9 761.8 L1994.1 819.3 L1994.4 794.4 L1994.6 859.4 L1994.8 779.7 L1995.0 791.6 L1995.3 724.0 L1995.5 791.5 L1995.7 835.3 L1996.0 846.0 L1996.2 796.9 L1996.4 811.7 L1996.7 808.6 L1996.9 788.0 L1997.1 763.5 L1997.4 865.9 L1997.6 866.1 L1997.8 762.2 L1998.1 855.9 L1998.3 744.5 L1998.5 795.9 L1998.7 872.1 L1999.0 836.9 L1999.2 865.6 L1999.4 737.5 L1999.7 833.2 L1999.9 819.0 L2000.1 831.0 L2000.4 731.2 L2000.6 798.8 L2000.8 841.6 L2001.1 774.0 L2001.3 810.6 L2001.5 749.3 L2001.8 834.1 L2002.0 766.4 L2002.2 855.9 L2002.5 780.8 L2002.7 836.0 L2002.9 769.3 L2003.1 792.4 L2003.4 822.4 L2003.6 849.8 L2003.8 868.0 L2004.1 869.9 L2004.3 780.2 L2004.5 800.8 L2004.8 856.8 L2005.0 831.3 L2005.2 856.2 L2005.5 810.9 L2005.7 861.9 L2005.9 850.8 L2006.2 854.9 L2006.4 848.7 L2006.6 782.0 L2006.9 872.6 L2007.1 796.1 L2007.3 823.8 L2007.5 779.9 L2007.8 855.1 L2008.0 841.1 L2008.2 797.4 L2008.5 785.7 L2008.7 849.0 L2008.9 780.1 L2009.2 727.9 L2009.4 736.7 L2009.6 843.5 L2009.9 800.2 L2010.1 775.9 L2010.3 835.9 L2010.6 773.4 L2010.8 802.4 L2011.0 798.2 L2011.2 812.6 L2011.5 719.7 L2011.7 770.3 L2011.9 806.6 L2012.2 715.8 L2012.4 828.2 L2012.6 742.8 L2012.9 813.6 L2013.1 839.0 L2013.3 817.7 L2013.6 801.7 L2013.8 780.3 L2014.0 796.8 L2014.3 849.4 L2014.5 810.4 L2014.7 853.7 L2015.0 848.2 L2015.2 842.8 L2015.4 787.3 L2015.6 861.9 L2015.9 857.0 L2016.1 840.3 L2016.3 870.9 L2016.6 719.4 L2016.8 732.4 L2017.0 803.9 L2017.3 861.3 L2017.5 826.8 L2017.7 838.8 L2018.0 707.0 L2018.2 793.8 L2018.4 797.6 L2018.7 413.0 L2018.9 785.2 L2019.1 861.3 L2019.4 842.8 L2019.6 836.4 L2019.8 773.8 L2020.0 794.7 L2020.3 770.0 L2020.5 839.1 L2020.7 835.0 L2021.0 836.0 L2021.2 794.8 L2021.4 807.3 L2021.7 850.7 L2021.9 875.2 L2022.1 818.2 L2022.4 837.3 L2022.6 835.4 L2022.8 837.2 L2023.1 735.6 L2023.3 780.7 L2023.5 816.4 L2023.7 822.6 L2024.0 823.8 L2024.2 862.6 L2024.4 796.1 L2024.7 864.9 L2024.9 839.0 L2025.1 777.0 L2025.4 747.2 L2025.6 879.1 L2025.8 861.8 L2026.1 779.8 L2026.3 819.8 L2026.5 848.9 L2026.8 780.7 L2027.0 842.8 L2027.2 746.9 L2027.5 832.0 L2027.7 779.0 L2027.9 847.4 L2028.1 701.6 L2028.4 811.1 L2028.6 879.7 L2028.8 813.1 L2029.1 804.2 L2029.3 688.8 L2029.5 859.2 L2029.8 798.6 L2030.0 584.0 L2030.2 812.6 L2030.5 758.4 L2030.7 859.6 L2030.9 785.5 L2031.2 818.8 L2031.4 828.3 L2031.6 809.1 L2031.9 794.4 L2032.1 862.7 L2032.3 841.2 L2032.5 819.6 L2032.8 866.2 L2033.0 827.3 L2033.2 823.6 L2033.5 812.6 L2033.7 855.4 L2033.9 859.3 L2034.2 801.4 L2034.4 872.4 L2034.6 868.2 L2034.9 799.5 L2035.1 830.9 L2035.3 834.2 L2035.6 871.2 L2035.8 795.9 L2036.0 797.4 L2036.2 808.2 L2036.5 736.2 L2036.7 829.1 L2036.9 799.2 L2037.2 861.7 L2037.4 685.6 L2037.6 795.6 L2037.9 822.5 L2038.1 799.7 L2038.3 848.0 L2038.6 641.0 L2038.8 839.1 L2039.0 879.8 L2039.3 795.4 L2039.5 755.6 L2039.7 762.7 L2040.0 797.0 L2040.2 794.3 L2040.4 794.3 L2040.6 807.1 L2040.9 816.9 L2041.1 810.3 L2041.3 836.5 L2041.6 799.1 L2041.8 800.7 L2042.0 790.5 L2042.3 811.9 L2042.5 840.0 L2042.7 822.9 L2043.0 703.4 L2043.2 816.8 L2043.4 861.1 L2043.7 866.0 L2043.9 790.0 L2044.1 715.6 L2044.4 796.5 L2044.6 806.8 L2044.8 788.0 L2045.0 800.7 L2045.3 818.9 L2045.5 880.8 L2045.7 868.4 L2046.0 799.1 L2046.2 759.5 L2046.4 820.0 L2046.7 861.6 L2046.9 749.4 L2047.1 830.3 L2047.4 841.5 L2047.6 772.2 L2047.8 829.9 L2048.1 885.9 L2048.3 867.4 L2048.5 870.0 L2048.7 880.1 L2049.0 724.3 L2049.2 841.9 L2049.4 804.3 L2049.7 876.9 L2049.9 835.4 L2050.1 812.7 L2050.4 847.9 L2050.6 867.7 L2050.8 802.7 L2051.1 802.8 L2051.3 844.7 L2051.5 795.8 L2051.8 833.6 L2052.0 806.7 L2052.2 865.6 L2052.5 824.2 L2052.7 870.3 L2052.9 750.3 L2053.1 867.9 L2053.4 729.5 L2053.6 809.7 L2053.8 804.3 L2054.1 834.6 L2054.3 724.0 L2054.5 832.5 L2054.8 701.0 L2055.0 714.5 L2055.2 817.3 L2055.5 815.8 L2055.7 765.6 L2055.9 853.9 L2056.2 767.0 L2056.4 853.3 L2056.6 838.3 L2056.9 753.7 L2057.1 869.9 L2057.3 813.7 L2057.5 871.0 L2057.8 843.3 L2058.0 858.1 L2058.2 807.4 L2058.5 850.6 L2058.7 820.9 L2058.9 764.5 L2059.2 728.0 L2059.4 864.6 L2059.6 844.4 L2059.9 822.8 L2060.1 872.9 L2060.3 761.3 L2060.6 833.5 L2060.8 840.1 L2061.0 762.2 L2061.2 752.9 L2061.5 805.0 L2061.7 827.1 L2061.9 851.6 L2062.2 822.2 L2062.4 834.8 L2062.6 868.7 L2062.9 853.7 L2063.1 855.4 L2063.3 863.2 L2063.6 851.8 L2063.8 854.4 L2064.0 731.0 L2064.3 817.5 L2064.5 853.5 L2064.7 820.5 L2065.0 824.4 L2065.2 851.4 L2065.4 812.0 L2065.6 821.3 L2065.9 886.0 L2066.1 831.8 L2066.3 862.9 L2066.6 771.7 L2066.8 836.5 L2067.0 876.8 L2067.3 809.9 L2067.5 851.8 L2067.7 838.3 L2068.0 810.5 L2068.2 841.6 L2068.4 808.0 L2068.7 865.2 L2068.9 750.8 L2069.1 876.2 L2069.4 881.0 L2069.6 745.5 L2069.8 852.4 L2070.0 883.2 L2070.3 825.5 L2070.5 784.5 L2070.7 823.8 L2071.0 766.2 L2071.2 836.6 L2071.4 876.0 L2071.7 861.4 L2071.9 747.1 L2072.1 777.9 L2072.4 771.8 L2072.6 833.0 L2072.8 817.4 L2073.1 859.1 L2073.3 816.4 L2073.5 833.4 L2073.7 820.0 L2074.0 843.5 L2074.2 852.2 L2074.4 842.2 L2074.7 830.1 L2074.9 856.1 L2075.1 847.1 L2075.4 855.9 L2075.6 864.2 L2075.8 870.7 L2076.1 867.5 L2076.3 867.7 L2076.5 832.7 L2076.8 783.2 L2077.0 827.3 L2077.2 805.7 L2077.5 851.0 L2077.7 854.5 L2077.9 838.9 L2078.1 860.3 L2078.4 856.4 L2078.6 861.5 L2078.8 857.3 L2079.1 762.0 L2079.3 831.6 L2079.5 795.7 L2079.8 762.0 L2080.0 829.1 L2080.2 847.9 L2080.5 840.4 L2080.7 843.9 L2080.9 862.2 L2081.2 763.6 L2081.4 847.7 L2081.6 861.8 L2081.9 860.4 L2082.1 854.9 L2082.3 844.6 L2082.5 857.4 L2082.8 863.1 L2083.0 875.8 L2083.2 803.5 L2083.5 843.5 L2083.7 857.8 L2083.9 862.3 L2084.2 894.3 L2084.4 870.6 L2084.6 825.8 L2084.9 851.1 L2085.1 855.3 L2085.3 835.9 L2085.6 877.1 L2085.8 857.9 L2086.0 860.4 L2086.2 783.5 L2086.5 868.6 L2086.7 861.5 L2086.9 833.1 L2087.2 827.7 L2087.4 846.8 L2087.6 861.5 L2087.9 846.5 L2088.1 801.1 L2088.3 846.3 L2088.6 875.7 L2088.8 847.0 L2089.0 865.5 L2089.3 857.0 L2089.5 867.9 L2089.7 874.9 L2090.0 846.5 L2090.2 865.9 L2090.4 871.1 L2090.6 844.9 L2090.9 859.8 L2091.1 857.1 L2091.3 865.0 L2091.6 856.0 L2091.8 866.5 L2092.0 850.6 L2092.3 847.3 L2092.5 855.5 L2092.7 869.7 L2093.0 842.3 L2093.2 841.6 L2093.4 846.7 L2093.7 875.2 L2093.9 858.3 L2094.1 861.0 L2094.4 865.7 L2094.6 844.4 L2094.8 843.6 L2095.0 846.4 L2095.3 847.4 L2095.5 892.3 L2095.7 870.5 L2096.0 864.4 L2096.2 844.0 L2096.4 854.8 L2096.7 847.8 L2096.9 866.5 L2097.1 860.1 L2097.4 863.9 L2097.6 873.1 L2097.8 845.7 L2098.1 853.4 L2098.3 885.9 L2098.5 870.9 L2098.7 864.9 L2099.0 846.7 L2099.2 818.9 L2099.4 799.5 L2099.7 823.5 L2099.9 848.1 L2100.1 875.0 L2100.4 867.5 L2100.6 857.9 L2100.8 888.3 L2101.1 853.5 L2101.3 865.0 L2101.5 853.3 L2101.8 884.2 L2102.0 877.1 L2102.2 840.2 L2102.5 875.4 L2102.7 870.7 L2102.9 862.6 L2103.1 863.5 L2103.4 859.7 L2103.6 881.7 L2103.8 878.6 L2104.1 871.6 L2104.3 870.9 L2104.5 882.6 L2104.8 859.6 L2105.0 871.3 L2105.2 866.0 L2105.5 875.7 L2105.7 879.4 L2105.9 857.4 L2106.2 864.0 L2106.4 875.7 L2106.6 822.2 L2106.9 858.0 L2107.1 871.4 L2107.3 848.5 L2107.5 869.2 L2107.8 860.4 L2108.0 873.5 L2108.2 854.6 L2108.5 862.6 L2108.7 873.7 L2108.9 894.6 L2109.2 882.5 L2109.4 864.6 L2109.6 888.2 L2109.9 888.1 L2110.1 864.9 L2110.3 901.4 L2110.6 897.6 L2110.8 887.8 L2111.0 855.6 L2111.2 870.1 L2111.5 878.9 L2111.7 883.8 L2111.9 889.9 L2112.2 840.8 L2112.4 892.2 L2112.6 870.6 L2112.9 881.9 L2113.1 898.2 L2113.3 899.5 L2113.6 886.9 L2113.8 885.3 L2114.0 837.7 L2114.3 894.4 L2114.5 846.3 L2114.7 885.2 L2115.0 876.9 L2115.2 888.2 L2115.4 875.2 L2115.6 882.0 L2115.9 886.5 L2116.1 888.6 L2116.3 886.1 L2116.6 890.7 L2116.8 900.7 L2117.0 881.1 L2117.3 882.7 L2117.5 882.7 L2117.7 903.4 L2118.0 892.9 L2118.2 896.6 L2118.4 887.1 L2118.7 862.5 L2118.9 901.1 L2119.1 856.4 L2119.4 889.8 L2119.6 897.9 L2119.8 903.7 L2120.0 886.7 L2120.3 862.4 L2120.5 885.0 L2120.7 871.2 L2121.0 898.3 L2121.2 894.4 L2121.4 897.4 L2121.7 892.0 L2121.9 885.9 L2122.1 898.9 L2122.4 893.5 L2122.6 892.0 L2122.8 897.9 L2123.1 895.9 L2123.3 895.2 L2123.5 894.3 L2123.7 892.0 L2124.0 898.2 L2124.2 903.1 L2124.4 898.6 L2124.7 890.2 L2124.9 899.8 L2125.1 898.9 L2125.4 894.4 L2125.6 896.5 L2125.8 896.8 L2126.1 903.4 L2126.3 901.3 L2126.5 879.5 L2126.8 900.6 L2127.0 884.9 L2127.2 902.0 L2127.5 881.2 L2127.7 902.0 L2127.9 897.6 L2128.1 897.5 L2128.4 903.6 L2128.6 899.8 L2128.8 902.7 L2129.1 902.7 L2129.3 905.8 L2129.5 904.0 L2129.8 902.7 L2130.0 906.0" fill="none" stroke="#368dd9" stroke-width="2.4" stroke-linejoin="round"/><circle cx="2130.0" cy="906.0" r="5" fill="#368dd9"/><line x1="398" y1="1219" x2="676" y2="1219" stroke="#f0f0f0" stroke-width="2"/><line x1="398" y1="1325" x2="676" y2="1325" stroke="#f0f0f0" stroke-width="2"/><path d="M590 1390 L590 1245 M664.6 1390 L664.6 1149 M677 1390 L677 1260 M670 1390 L670 1384" fill="none" stroke="#368dd9" stroke-width="2.6"/><line x1="890" y1="1214" x2="1165" y2="1214" stroke="#f0f0f0" stroke-width="2"/><line x1="890" y1="1286" x2="1165" y2="1286" stroke="#f0f0f0" stroke-width="2"/><line x1="890" y1="1357.6" x2="1165" y2="1357.6" stroke="#f0f0f0" stroke-width="2"/><path d="M882.7 1149.5 L883.1 1159.4 L883.4 1174.7 L883.8 1223.4 L884.1 1183.1 L884.5 1172.8 L884.8 1217.7 L885.2 1285.6 L885.5 1245.8 L885.9 1259.9 L886.2 1269.1 L886.6 1275.0 L886.9 1287.8 L887.3 1309.8 L887.6 1272.0 L888.0 1315.3 L888.3 1317.3 L888.7 1320.1 L889.0 1364.8 L889.4 1350.2 L889.7 1350.9 L890.1 1338.4 L890.4 1335.7 L890.8 1345.1 L891.1 1357.3 L891.5 1369.6 L891.8 1364.8 L892.2 1361.2 L892.5 1350.9 L892.9 1352.2 L893.2 1345.2 L893.6 1332.5 L893.9 1307.5 L894.3 1358.7 L894.6 1302.6 L895.0 1360.3 L895.3 1363.7 L895.7 1373.2 L896.0 1332.6 L896.4 1327.3 L896.7 1349.7 L897.1 1355.9 L897.4 1328.8 L897.8 1329.8 L898.1 1328.4 L898.5 1331.7 L898.8 1373.0 L899.2 1354.7 L899.5 1388.5 L899.9 1375.6 L900.2 1353.3 L900.6 1310.2 L900.9 1387.0 L901.3 1320.0 L901.6 1391.6 L902.0 1391.2 L902.3 1391.1 L902.7 1277.9 L903.0 1342.6 L903.4 1359.3 L903.7 1290.5 L904.1 1376.5 L904.5 1292.4 L904.8 1306.2 L905.2 1390.4 L905.5 1388.6 L905.9 1388.2 L906.2 1385.8 L906.6 1387.3 L906.9 1382.2 L907.3 1365.4 L907.6 1368.0 L908.0 1367.7 L908.3 1339.1 L908.7 1352.4 L909.0 1357.6 L909.4 1364.0 L909.7 1353.0 L910.1 1366.7 L910.4 1400.2 L910.8 1301.5 L911.1 1366.0 L911.5 1400.6 L911.8 1382.2 L912.2 1358.4 L912.5 1343.4 L912.9 1351.8 L913.2 1340.9 L913.6 1386.1 L913.9 1365.6 L914.3 1350.0 L914.6 1367.3 L915.0 1356.6 L915.3 1335.0 L915.7 1340.0 L916.0 1338.0 L916.4 1340.0 L916.7 1335.2 L917.1 1335.6 L917.4 1340.4 L917.8 1346.6 L918.1 1338.4 L918.5 1338.1 L918.8 1336.9 L919.2 1346.0 L919.5 1349.0 L919.9 1337.3 L920.2 1354.7 L920.6 1344.8 L920.9 1357.2 L921.3 1342.6 L921.6 1353.8 L922.0 1353.3 L922.3 1356.1 L922.7 1366.0 L923.0 1369.9 L923.4 1367.2 L923.7 1365.6 L924.1 1340.3 L924.4 1402.0 L924.8 1330.8 L925.1 1329.9 L925.5 1330.9 L925.9 1334.7 L926.2 1368.6 L926.6 1374.3 L926.9 1381.7 L927.3 1367.3 L927.6 1370.1 L928.0 1380.8 L928.3 1396.1 L928.7 1375.3 L929.0 1369.0 L929.4 1345.7 L929.7 1336.2 L930.1 1329.5 L930.4 1341.9 L930.8 1399.3 L931.1 1401.4 L931.5 1350.8 L931.8 1342.3 L932.2 1367.7 L932.5 1384.6 L932.9 1381.2 L933.2 1359.7 L933.6 1332.9 L933.9 1376.6 L934.3 1316.0 L934.6 1344.0 L935.0 1402.2 L935.3 1333.5 L935.7 1334.8 L936.0 1393.7 L936.4 1338.7 L936.7 1329.5 L937.1 1378.9 L937.4 1362.6 L937.8 1398.3 L938.1 1361.3 L938.5 1330.7 L938.8 1331.4 L939.2 1389.8 L939.5 1366.2 L939.9 1316.6 L940.2 1360.8 L940.6 1350.4 L940.9 1363.4 L941.3 1324.3 L941.6 1340.9 L942.0 1335.0 L942.3 1332.8 L942.7 1321.9 L943.0 1322.0 L943.4 1333.7 L943.7 1379.9 L944.1 1388.1 L944.4 1341.7 L944.8 1356.5 L945.1 1360.4 L945.5 1307.1 L945.8 1344.2 L946.2 1339.9 L946.5 1358.0 L946.9 1385.7 L947.2 1382.3 L947.6 1381.8 L948.0 1380.0 L948.3 1373.3 L948.7 1377.8 L949.0 1348.9 L949.4 1308.7 L949.7 1398.9 L950.1 1381.5 L950.4 1359.7 L950.8 1373.9 L951.1 1371.6 L951.5 1359.5 L951.8 1341.3 L952.2 1391.0 L952.5 1372.6 L952.9 1379.3 L953.2 1372.0 L953.6 1366.9 L953.9 1312.2 L954.3 1320.3 L954.6 1401.9 L955.0 1319.1 L955.3 1311.7 L955.7 1320.5 L956.0 1344.4 L956.4 1358.2 L956.7 1358.1 L957.1 1323.6 L957.4 1329.5 L957.8 1337.3 L958.1 1305.1 L958.5 1317.8 L958.8 1355.6 L959.2 1366.1 L959.5 1351.3 L959.9 1377.9 L960.2 1380.8 L960.6 1377.5 L960.9 1371.8 L961.3 1375.8 L961.6 1382.1 L962.0 1374.9 L962.3 1361.5 L962.7 1368.5 L963.0 1320.0 L963.4 1328.8 L963.7 1330.8 L964.1 1338.8 L964.4 1340.6 L964.8 1352.9 L965.1 1354.8 L965.5 1305.2 L965.8 1350.8 L966.2 1401.2 L966.5 1346.1 L966.9 1369.1 L967.2 1329.3 L967.6 1342.2 L967.9 1356.6 L968.3 1330.3 L968.6 1331.7 L969.0 1367.8 L969.4 1358.6 L969.7 1337.6 L970.1 1319.9 L970.4 1326.6 L970.8 1337.7 L971.1 1357.6 L971.5 1397.9 L971.8 1375.6 L972.2 1369.4 L972.5 1347.8 L972.9 1349.0 L973.2 1396.0 L973.6 1367.7 L973.9 1372.2 L974.3 1348.1 L974.6 1340.7 L975.0 1373.8 L975.3 1344.8 L975.7 1364.3 L976.0 1382.2 L976.4 1380.4 L976.7 1374.7 L977.1 1382.0 L977.4 1377.5 L977.8 1367.7 L978.1 1391.2 L978.5 1374.5 L978.8 1291.5 L979.2 1381.8 L979.5 1368.9 L979.9 1354.2 L980.2 1342.3 L980.6 1351.5 L980.9 1335.4 L981.3 1361.0 L981.6 1362.3 L982.0 1302.1 L982.3 1314.6 L982.7 1399.5 L983.0 1335.2 L983.4 1338.9 L983.7 1345.5 L984.1 1336.6 L984.4 1349.5 L984.8 1316.6 L985.1 1312.6 L985.5 1312.1 L985.8 1316.5 L986.2 1397.1 L986.5 1352.0 L986.9 1345.6 L987.2 1320.4 L987.6 1346.3 L987.9 1393.9 L988.3 1340.1 L988.6 1402.3 L989.0 1330.7 L989.3 1321.9 L989.7 1319.7 L990.0 1288.9 L990.4 1324.7 L990.8 1289.4 L991.1 1355.7 L991.5 1314.8 L991.8 1349.1 L992.2 1343.4 L992.5 1396.3 L992.9 1298.7 L993.2 1315.2 L993.6 1307.7 L993.9 1389.6 L994.3 1330.3 L994.6 1350.2 L995.0 1373.9 L995.3 1381.1 L995.7 1334.9 L996.0 1328.9 L996.4 1356.4 L996.7 1352.0 L997.1 1350.3 L997.4 1360.5 L997.8 1350.2 L998.1 1373.8 L998.5 1347.4 L998.8 1367.8 L999.2 1300.1 L999.5 1341.1 L999.9 1360.0 L1000.2 1357.7 L1000.6 1366.9 L1000.9 1327.6 L1001.3 1339.0 L1001.6 1316.9 L1002.0 1319.0 L1002.3 1283.5 L1002.7 1349.5 L1003.0 1304.0 L1003.4 1389.8 L1003.7 1301.6 L1004.1 1292.5 L1004.4 1317.9 L1004.8 1391.9 L1005.1 1339.6 L1005.5 1401.6 L1005.8 1383.7 L1006.2 1325.8 L1006.5 1367.1 L1006.9 1353.5 L1007.2 1386.2 L1007.6 1301.8 L1007.9 1302.2 L1008.3 1310.5 L1008.6 1342.4 L1009.0 1321.8 L1009.3 1315.2 L1009.7 1376.3 L1010.0 1366.1 L1010.4 1341.0 L1010.7 1400.8 L1011.1 1309.9 L1011.4 1270.1 L1011.8 1287.2 L1012.2 1337.8 L1012.5 1366.1 L1012.9 1347.5 L1013.2 1276.2 L1013.6 1325.7 L1013.9 1312.1 L1014.3 1299.4 L1014.6 1315.7 L1015.0 1319.0 L1015.3 1321.9 L1015.7 1305.9 L1016.0 1301.0 L1016.4 1303.6 L1016.7 1328.2 L1017.1 1343.8 L1017.4 1323.7 L1017.8 1391.1 L1018.1 1382.0 L1018.5 1371.8 L1018.8 1388.0 L1019.2 1390.8 L1019.5 1387.5 L1019.9 1366.1 L1020.2 1381.9 L1020.6 1399.0 L1020.9 1347.2 L1021.3 1336.2 L1021.6 1274.2 L1022.0 1301.1 L1022.3 1337.4 L1022.7 1356.2 L1023.0 1382.1 L1023.4 1373.9 L1023.7 1289.9 L1024.1 1281.6 L1024.4 1316.5 L1024.8 1316.8 L1025.1 1395.9 L1025.5 1313.2 L1025.8 1271.9 L1026.2 1357.0 L1026.5 1366.0 L1026.9 1338.5 L1027.2 1330.7 L1027.6 1367.5 L1027.9 1397.0 L1028.3 1366.7 L1028.6 1323.8 L1029.0 1323.3 L1029.3 1311.0 L1029.7 1304.3 L1030.0 1400.5 L1030.4 1329.7 L1030.7 1327.3 L1031.1 1315.3 L1031.4 1350.1 L1031.8 1393.9 L1032.1 1390.9 L1032.5 1392.6 L1032.8 1344.7 L1033.2 1353.1 L1033.5 1358.9 L1033.9 1267.8 L1034.3 1376.8 L1034.6 1399.6 L1035.0 1341.3 L1035.3 1332.8 L1035.7 1381.2 L1036.0 1384.3 L1036.4 1379.6 L1036.7 1372.6 L1037.1 1383.8 L1037.4 1356.6 L1037.8 1327.0 L1038.1 1306.4 L1038.5 1347.2 L1038.8 1363.9 L1039.2 1375.6 L1039.5 1366.0 L1039.9 1392.4 L1040.2 1352.6 L1040.6 1383.0 L1040.9 1344.7 L1041.3 1333.3 L1041.6 1312.6 L1042.0 1327.6 L1042.3 1328.6 L1042.7 1350.5 L1043.0 1332.1 L1043.4 1309.9 L1043.7 1272.3 L1044.1 1378.8 L1044.4 1383.6 L1044.8 1368.7 L1045.1 1371.3 L1045.5 1315.4 L1045.8 1319.8 L1046.2 1366.0 L1046.5 1279.1 L1046.9 1335.0 L1047.2 1366.6 L1047.6 1354.3 L1047.9 1372.4 L1048.3 1321.2 L1048.6 1318.9 L1049.0 1339.6 L1049.3 1352.5 L1049.7 1366.7 L1050.0 1267.4 L1050.4 1346.8 L1050.7 1267.2 L1051.1 1378.2 L1051.4 1321.6 L1051.8 1278.0 L1052.1 1327.5 L1052.5 1340.5 L1052.8 1372.9 L1053.2 1322.8 L1053.5 1348.9 L1053.9 1307.7 L1054.2 1307.7 L1054.6 1310.6 L1054.9 1399.4 L1055.3 1314.5 L1055.7 1314.8 L1056.0 1401.1 L1056.4 1322.4 L1056.7 1302.3 L1057.1 1300.9 L1057.4 1304.7 L1057.8 1329.9 L1058.1 1262.3 L1058.5 1270.1 L1058.8 1388.7 L1059.2 1353.4 L1059.5 1355.3 L1059.9 1398.1 L1060.2 1363.8 L1060.6 1323.6 L1060.9 1329.7 L1061.3 1264.0 L1061.6 1276.3 L1062.0 1302.0 L1062.3 1346.5 L1062.7 1301.1 L1063.0 1397.1 L1063.4 1320.2 L1063.7 1398.3 L1064.1 1376.0 L1064.4 1336.4 L1064.8 1375.9 L1065.1 1345.9 L1065.5 1388.8 L1065.8 1392.4 L1066.2 1279.1 L1066.5 1383.5 L1066.9 1373.9 L1067.2 1333.4 L1067.6 1369.9 L1067.9 1370.6 L1068.3 1379.9 L1068.6 1386.3 L1069.0 1390.7 L1069.3 1390.4 L1069.7 1377.1 L1070.0 1366.4 L1070.4 1368.3 L1070.7 1354.1 L1071.1 1341.8 L1071.4 1386.2 L1071.8 1381.9 L1072.1 1391.6 L1072.5 1365.9 L1072.8 1355.4 L1073.2 1336.7 L1073.5 1399.0 L1073.9 1326.9 L1074.2 1281.1 L1074.6 1324.4 L1074.9 1382.5 L1075.3 1383.2 L1075.6 1347.6 L1076.0 1278.1 L1076.3 1360.6 L1076.7 1370.2 L1077.1 1402.2 L1077.4 1402.3 L1077.8 1264.2 L1078.1 1318.0 L1078.5 1379.7 L1078.8 1284.1 L1079.2 1399.4 L1079.5 1356.7 L1079.9 1287.5 L1080.2 1324.8 L1080.6 1398.9 L1080.9 1300.9 L1081.3 1280.5 L1081.6 1310.5 L1082.0 1312.4 L1082.3 1400.3 L1082.7 1295.5 L1083.0 1348.4 L1083.4 1309.1 L1083.7 1316.3 L1084.1 1401.1 L1084.4 1324.5 L1084.8 1314.3 L1085.1 1302.7 L1085.5 1401.2 L1085.8 1359.5 L1086.2 1398.0 L1086.5 1396.1 L1086.9 1399.2 L1087.2 1396.6 L1087.6 1375.6 L1087.9 1379.2 L1088.3 1332.2 L1088.6 1348.6 L1089.0 1402.3 L1089.3 1320.7 L1089.7 1371.0 L1090.0 1390.4 L1090.4 1387.3 L1090.7 1391.7 L1091.1 1400.3 L1091.4 1280.2 L1091.8 1333.5 L1092.1 1402.4 L1092.5 1353.4 L1092.8 1361.3 L1093.2 1319.3 L1093.5 1372.2 L1093.9 1371.2 L1094.2 1397.0 L1094.6 1399.0 L1094.9 1377.9 L1095.3 1371.4 L1095.6 1342.7 L1096.0 1327.1 L1096.3 1331.6 L1096.7 1357.2 L1097.0 1390.9 L1097.4 1353.3 L1097.7 1375.5 L1098.1 1369.1 L1098.5 1357.8 L1098.8 1387.1 L1099.2 1366.3 L1099.5 1393.6 L1099.9 1373.4 L1100.2 1341.3 L1100.6 1371.3 L1100.9 1329.0 L1101.3 1320.9 L1101.6 1402.4 L1102.0 1342.3 L1102.3 1402.4 L1102.7 1319.1 L1103.0 1318.3 L1103.4 1337.3 L1103.7 1362.5 L1104.1 1296.7 L1104.4 1290.8 L1104.8 1363.7 L1105.1 1402.4 L1105.5 1291.9 L1105.8 1392.8 L1106.2 1374.9 L1106.5 1396.5 L1106.9 1397.9 L1107.2 1363.9 L1107.6 1297.9 L1107.9 1367.2 L1108.3 1388.8 L1108.6 1344.5 L1109.0 1341.7 L1109.3 1367.6 L1109.7 1378.3 L1110.0 1346.3 L1110.4 1336.1 L1110.7 1310.7 L1111.1 1338.7 L1111.4 1355.1 L1111.8 1402.4 L1112.1 1375.6 L1112.5 1327.7 L1112.8 1361.6 L1113.2 1315.3 L1113.5 1402.4 L1113.9 1398.9 L1114.2 1352.0 L1114.6 1389.8 L1114.9 1387.5 L1115.3 1394.9 L1115.6 1382.0 L1116.0 1370.1 L1116.3 1402.4 L1116.7 1395.4 L1117.0 1390.4 L1117.4 1313.8 L1117.7 1345.1 L1118.1 1365.6 L1118.4 1367.2 L1118.8 1371.5 L1119.1 1390.1 L1119.5 1393.5 L1119.8 1402.4 L1120.2 1299.4 L1120.6 1300.7 L1120.9 1321.4 L1121.3 1392.6 L1121.6 1386.5 L1122.0 1402.4 L1122.3 1383.1 L1122.7 1393.1 L1123.0 1361.5 L1123.4 1374.1 L1123.7 1308.0 L1124.1 1292.9 L1124.4 1345.3 L1124.8 1301.4 L1125.1 1357.7 L1125.5 1350.1 L1125.8 1380.4 L1126.2 1402.4 L1126.5 1345.7 L1126.9 1350.1 L1127.2 1402.4 L1127.6 1384.3 L1127.9 1367.8 L1128.3 1363.2 L1128.6 1402.4 L1129.0 1362.3 L1129.3 1351.2 L1129.7 1345.0 L1130.0 1402.4 L1130.4 1365.3 L1130.7 1401.7 L1131.1 1400.1 L1131.4 1380.5 L1131.8 1377.1 L1132.1 1381.8 L1132.5 1385.3 L1132.8 1387.8 L1133.2 1389.2 L1133.5 1302.3 L1133.9 1388.5 L1134.2 1401.6 L1134.6 1391.0 L1134.9 1376.7 L1135.3 1388.0 L1135.6 1397.9 L1136.0 1398.3 L1136.3 1400.5 L1136.7 1392.9 L1137.0 1381.3 L1137.4 1402.4 L1137.7 1393.0 L1138.1 1400.9 L1138.4 1287.9 L1138.8 1402.4 L1139.1 1385.6 L1139.5 1402.4 L1139.8 1402.4 L1140.2 1357.4 L1140.5 1359.7 L1140.9 1298.7 L1141.2 1343.9 L1141.6 1340.7 L1142.0 1345.0 L1142.3 1336.7 L1142.7 1341.8 L1143.0 1351.0 L1143.4 1352.0 L1143.7 1361.2 L1144.1 1358.2 L1144.4 1336.5 L1144.8 1329.9 L1145.1 1339.8 L1145.5 1365.1 L1145.8 1362.2 L1146.2 1346.2 L1146.5 1351.0 L1146.9 1320.8 L1147.2 1318.2 L1147.6 1320.9 L1147.9 1327.8 L1148.3 1396.7 L1148.6 1327.9 L1149.0 1314.3 L1149.3 1314.3 L1149.7 1327.3 L1150.0 1307.3 L1150.4 1306.0 L1150.7 1309.7 L1151.1 1349.7 L1151.4 1396.2 L1151.8 1367.3 L1152.1 1368.1 L1152.5 1354.2 L1152.8 1344.6 L1153.2 1316.1 L1153.5 1348.0 L1153.9 1354.7 L1154.2 1355.6 L1154.6 1356.7 L1154.9 1354.5 L1155.3 1349.1 L1155.6 1346.7 L1156.0 1357.7 L1156.3 1332.9 L1156.7 1289.5 L1157.0 1318.7 L1157.4 1346.2 L1157.7 1343.2 L1158.1 1287.0 L1158.4 1345.9 L1158.8 1340.2 L1159.1 1301.8 L1159.5 1277.9 L1159.8 1300.3 L1160.2 1306.4 L1160.5 1312.2 L1160.9 1327.5 L1161.2 1353.0 L1161.6 1341.7 L1161.9 1316.3 L1162.3 1316.0 L1162.6 1324.8 L1163.0 1326.0" fill="none" stroke="#368dd9" stroke-width="2.9" stroke-linejoin="round"/><circle cx="1163.0" cy="1326.0" r="5" fill="#368dd9"/><line x1="1384" y1="1222.5" x2="1647" y2="1222.5" stroke="#f0f0f0" stroke-width="2"/><line x1="1384" y1="1306.3" x2="1647" y2="1306.3" stroke="#f0f0f0" stroke-width="2"/><path d="M1379.2 1390.5 L1379.7 1149.5 L1380.8 1149.5 L1381.8 1231.5 L1383.5 1275.5 L1386.0 1277.1 L1386.8 1337.2 L1389.4 1322.8 L1391.1 1338.0 L1393.6 1378.6 L1395.3 1366.8 L1397.8 1351.6 L1401.2 1365.1 L1402.9 1383.7 L1407.1 1382.9 L1408.8 1358.3 L1411.0 1335.5 L1413.1 1383.7 L1416.4 1383.7 L1419.0 1343.1 L1421.5 1353.3 L1424.1 1350.7 L1427.4 1370.2 L1429.1 1383.7 L1431.7 1383.7 L1432.5 1353.3 L1435.1 1383.7 L1436.7 1366.8 L1439.8 1322.8 L1441.0 1370.2 L1442.7 1370.2 L1445.2 1364.2 L1446.9 1383.7 L1449.4 1366.8 L1451.1 1383.7 L1454.5 1383.7 L1456.2 1360.0 L1458.7 1353.3 L1461.3 1383.7 L1463.0 1390.5 L1477.3 1390.5 L1478.2 1379.5 L1479.5 1390.5 L1490.9 1390.5 L1491.7 1383.7 L1492.7 1390.5 Z" fill="#368dd9" stroke="#368dd9" stroke-width="2.2" stroke-linejoin="round"/><line x1="1871" y1="1202" x2="2128" y2="1202" stroke="#f0f0f0" stroke-width="2"/><line x1="1871" y1="1290" x2="2128" y2="1290" stroke="#f0f0f0" stroke-width="2"/><line x1="1871" y1="1379.4" x2="2128" y2="1379.4" stroke="#f0f0f0" stroke-width="2"/><path d="M1871.6 1388.6 L1872.4 1381.1 L1876.7 1351.0 L1880.4 1338.5 L1884.2 1320.9 L1886.2 1318.4 L1887.9 1272.0 L1889.7 1298.3 L1891.7 1299.6 L1894.2 1348.5 L1898.0 1330.9 L1901.7 1264.5 L1904.2 1267.0 L1905.5 1364.8 L1910.5 1353.5 L1915.5 1277.0 L1917.5 1312.1 L1919.3 1312.1 L1923.0 1361.0 L1925.6 1314.6 L1928.6 1220.6 L1930.6 1245.7 L1931.8 1351.0 L1938.1 1308.4 L1940.6 1308.4 L1941.9 1376.1 L1944.4 1292.1 L1946.1 1290.8 L1948.1 1149.1 L1950.1 1289.6 L1951.9 1289.6 L1954.4 1341.0 L1958.2 1215.6 L1960.7 1341.0 L1963.2 1257.0 L1964.9 1258.2 L1966.9 1356.0 L1969.4 1157.9 L1970.7 1160.4 L1971.9 1162.9 L1973.7 1240.7 L1975.7 1310.9 L1978.2 1310.9 L1980.2 1151.6 L1982.0 1267.0 L1984.5 1267.0 L1988.2 1302.1 L1990.8 1335.9 L1994.5 1183.0 L1996.3 1280.8 L1998.3 1332.2 L2002.0 1332.2 L2004.5 1366.0 L2007.1 1272.0 L2010.8 1270.8 L2014.6 1159.2 L2016.3 1308.4 L2018.3 1320.9 L2023.4 1343.5 L2027.1 1315.9 L2028.9 1378.6 L2032.1 1388.6 L2034.6 1388.6 L2035.9 1348.5 L2039.6 1319.6 L2042.2 1343.5 L2045.4 1312.1 L2048.4 1348.5 L2053.4 1330.9 L2056.4 1312.1 L2059.7 1343.5 L2063.5 1351.0 L2066.0 1388.6 L2069.7 1354.8 L2071.5 1388.6 L2073.5 1376.1 L2077.3 1388.6 L2082.3 1388.6 L2083.5 1362.3 L2086.0 1388.6 L2089.0 1342.2 L2091.1 1388.6 L2093.6 1381.1 L2096.1 1388.6 L2101.1 1376.1 L2103.6 1388.6 L2108.1 1373.6 L2109.9 1388.6 L2111.1 1388.6 L2111.1 1400 L1871.6 1400 Z" fill="#368dd9" stroke="#368dd9" stroke-width="2.2" stroke-linejoin="round"/><path d="M259 249 L269.5 259.5 L280 249" fill="none" stroke="#9a9a9a" stroke-width="2.2"/><path d="M1996 250 L2027.5 250 M2011.7 235 L2011.7 265.5" fill="none" stroke="#6a6a6a" stroke-width="2.2"/></svg>
</div>
<div class="a" style="left:112px;top:1388px;width:2160px;height:130px;background:#fff;border-top:2px solid #dedede"></div>
<div class="t" style="left:339px;top:1440.4px;font-size:32px;color:#3a3a3a">My Workspace</div>
<div class="a" style="left:575px;top:1437px;width:8px;height:8px;border-radius:50%;background:#777"></div>
<div class="a" style="left:575px;top:1450.7px;width:8px;height:8px;border-radius:50%;background:#777"></div>
<div class="a" style="left:575px;top:1463.5px;width:8px;height:8px;border-radius:50%;background:#777"></div>
<div class="t" style="left:1662px;top:1439px;font-size:29.5px;color:#b5b5b5">Updated just now</div>
<div class="a" style="left:1662px;top:1472.5px;width:228px;height:0;border-top:2px dashed #b5b5b5"></div>
<div class="a" style="left:1925px;top:1417px;width:144px;height:75px;border-radius:6px;background:#f7f7f7"></div>
<svg style="left:0;top:0" width="2414" height="1666" viewBox="0 0 2414 1666"><path d="M1951 1446 A13 13 0 1 1 1955 1463" fill="none" stroke="#cdcdcd" stroke-width="3"/><path d="M1947 1437 L1947 1449 L1959 1449" fill="none" stroke="#cdcdcd" stroke-width="3"/><path d="M2043 1446 A13 13 0 1 0 2039 1463" fill="none" stroke="#cdcdcd" stroke-width="3"/><path d="M2047 1437 L2047 1449 L2035 1449" fill="none" stroke="#cdcdcd" stroke-width="3"/></svg>
<div class="a" style="left:2110px;top:1354.6px;width:118px;height:118px;border-radius:50%;background:#ebebeb;box-shadow:0 4px 14px rgba(0,0,0,0.12)"></div>
<svg style="left:0;top:0" width="2414" height="1666" viewBox="0 0 2414 1666"><ellipse cx="2169.6" cy="1412" rx="29.5" ry="26.8" fill="#777"/><path d="M2172 1437 Q2184 1446 2193 1445.5 Q2185 1438 2190 1428 Z" fill="#777"/></svg>
<div class="a" style="left:112px;top:77px;width:2190px;height:156px;border:1.5px solid #5b5c5f;border-bottom:none;border-radius:20px 20px 0 0"></div>
</div>
</body></html>
